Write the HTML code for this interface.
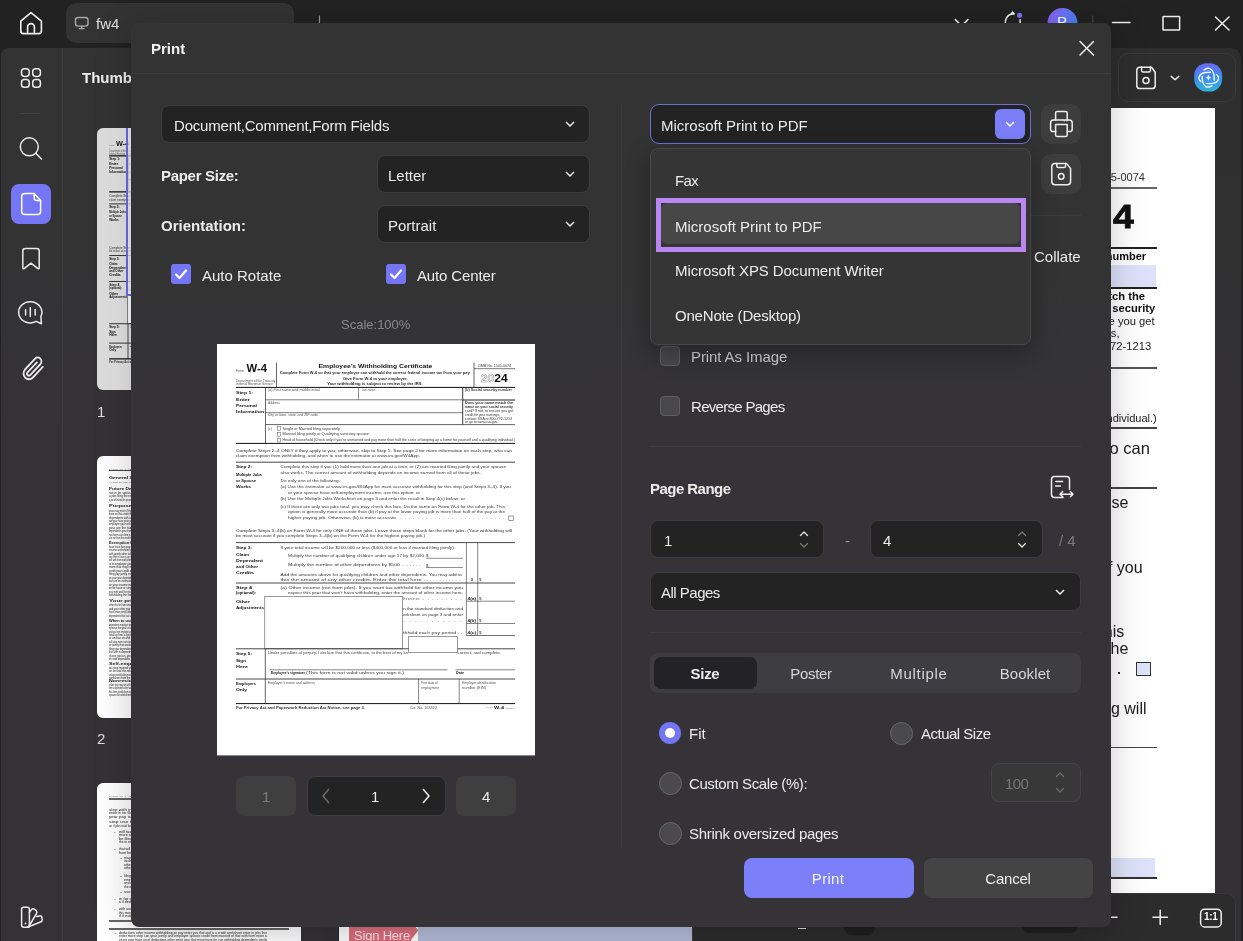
<!DOCTYPE html>
<html><head><meta charset="utf-8">
<style>
*{box-sizing:border-box;margin:0;padding:0}
html,body{width:1243px;height:941px;overflow:hidden;background:#222;font-family:"Liberation Sans",sans-serif;color:#ececec}
.a{position:absolute}
.t{position:absolute;white-space:nowrap;line-height:1;will-change:transform}
svg{position:absolute;overflow:visible;will-change:transform}
.b{font-weight:700}
.dd{background:#232323;border:1px solid #3d3d3d;border-radius:8px}
.cbon{width:20px;height:20px;background:#7476f5;border-radius:3px}
.cboff{width:20px;height:20px;background:#48474b;border:1px solid #605f63;border-radius:4px}
.rdoff{width:23px;height:23px;border-radius:50%;background:#4a494d;border:1px solid #68676b}
</style></head><body>
<!-- top bar -->
<div class="a" style="left:0;top:0;width:1243px;height:941px;background:#222"></div>
<div class="a" style="left:66px;top:3px;width:228px;height:40px;background:#333;border-radius:10px"></div>
<div class="t" style="left:96px;top:16px;font-size:15px;color:#ddd">fw4</div>

<!-- left sidebar -->
<div class="a" style="left:1px;top:48px;width:62px;height:893px;background:linear-gradient(#333333 0px,#333333 150px,#343236 380px,#343236 893px);border-top-left-radius:8px"></div>
<div class="a" style="left:62px;top:48px;width:1px;height:893px;background:#3c3c3c"></div>
<div class="a" style="left:63px;top:48px;width:260px;height:893px;background:linear-gradient(#333333 0px,#333333 150px,#343236 380px,#343236 893px)"></div>
<div class="a" style="left:11px;top:184px;width:40px;height:40px;background:#7476f5;border-radius:8px"></div>
<div class="t" style="left:82px;top:70px;font-size:15px;font-weight:700;color:#f0f0f0">Thumbnails</div>

<!-- thumbnails -->
<div class="a" style="left:97px;top:128px;width:204px;height:262px;background:linear-gradient(90deg,#dadada,#e6e6e6 30px,#e6e6e6);border-radius:6px"></div>
<div class="a" style="left:97px;top:456px;width:204px;height:262px;background:#fff;border-radius:6px"></div>
<div class="a" style="left:97px;top:783px;width:204px;height:262px;background:#fff;border-radius:6px"></div>
<svg style="left:97px;top:128px" width="204" height="262" viewBox="0 0 318 408" preserveAspectRatio="none" font-family="Liberation Sans, sans-serif"><text x="19.0" y="28.0" font-size="3.77" fill="#555" textLength="8.0" lengthAdjust="spacingAndGlyphs">Form</text>
<text x="29.5" y="27.9" font-size="12.100000000000001" font-weight="700" fill="#111" textLength="20.5" lengthAdjust="spacingAndGlyphs">W-4</text>
<text x="19.0" y="38.1" font-size="4.06" fill="#555" textLength="39.5" lengthAdjust="spacingAndGlyphs">Department of the Treasury</text>
<text x="19.0" y="41.8" font-size="4.06" fill="#555" textLength="37.0" lengthAdjust="spacingAndGlyphs">Internal Revenue Service</text>
<line x1="59.5" y1="18.5" x2="59.5" y2="43.0" stroke="#222" stroke-width="1.19"/>
<text x="101.6" y="25.2" font-size="8.99" font-weight="700" fill="#111" textLength="113.7" lengthAdjust="spacingAndGlyphs">Employee’s Withholding Certificate</text>
<text x="62.7" y="30.6" font-size="5.075" font-weight="700" fill="#2a2a2a" textLength="190.8" lengthAdjust="spacingAndGlyphs">Complete Form W-4 so that your employer can withhold the correct federal income tax from your pay.</text>
<text x="126.0" y="36.2" font-size="5.075" font-weight="700" fill="#2a2a2a" textLength="64.6" lengthAdjust="spacingAndGlyphs">Give Form W-4 to your employer.</text>
<text x="110.0" y="41.6" font-size="5.075" font-weight="700" fill="#2a2a2a" textLength="95.7" lengthAdjust="spacingAndGlyphs">Your withholding is subject to review by the IRS.</text>
<line x1="257.0" y1="18.5" x2="257.0" y2="43.0" stroke="#222" stroke-width="1.19"/>
<text x="261.0" y="23.2" font-size="4.205" fill="#444" textLength="33.0" lengthAdjust="spacingAndGlyphs">OMB No. 1545-0074</text>
<line x1="257.0" y1="24.7" x2="298.0" y2="24.7" stroke="#222" stroke-width="1.02"/>
<text x="263.8" y="37.8" font-size="10.2" font-weight="700" textLength="27" lengthAdjust="spacingAndGlyphs"><tspan fill="#fff" stroke="#999" stroke-width="0.5">20</tspan><tspan fill="#111">24</tspan></text>
<line x1="19.0" y1="43.4" x2="298.0" y2="43.4" stroke="#111" stroke-width="1.70"/>
<text x="19.0" y="50.3" font-size="5.654999999999999" font-weight="700" fill="#111" textLength="17.0" lengthAdjust="spacingAndGlyphs">Step 1:</text>
<text x="19.0" y="58.0" font-size="5.654999999999999" font-weight="700" fill="#111" textLength="14.0" lengthAdjust="spacingAndGlyphs">Enter</text>
<text x="19.0" y="64.0" font-size="5.654999999999999" font-weight="700" fill="#111" textLength="21.0" lengthAdjust="spacingAndGlyphs">Personal</text>
<text x="19.0" y="70.0" font-size="5.654999999999999" font-weight="700" fill="#111" textLength="28.0" lengthAdjust="spacingAndGlyphs">Information</text>
<line x1="48.5" y1="43.4" x2="48.5" y2="99.3" stroke="#222" stroke-width="1.19"/>
<text x="51.0" y="47.4" font-size="3.915" fill="#555" textLength="52.0" lengthAdjust="spacingAndGlyphs">(a)  First name and middle initial</text>
<line x1="141.5" y1="43.4" x2="141.5" y2="55.8" stroke="#222" stroke-width="0.85"/>
<text x="145.0" y="47.4" font-size="3.915" fill="#555" textLength="13.0" lengthAdjust="spacingAndGlyphs">Last name</text>
<line x1="245.7" y1="43.4" x2="245.7" y2="80.6" stroke="#222" stroke-width="1.53"/>
<text x="248.0" y="47.9" font-size="4.06" font-weight="700" fill="#444" textLength="47.0" lengthAdjust="spacingAndGlyphs">(b)  Social security number</text>
<line x1="48.5" y1="55.8" x2="245.7" y2="55.8" stroke="#222" stroke-width="1.02"/>
<line x1="245.7" y1="56.0" x2="298.0" y2="56.0" stroke="#222" stroke-width="1.70"/>
<text x="51.0" y="59.9" font-size="3.915" fill="#555" textLength="12.0" lengthAdjust="spacingAndGlyphs">Address</text>
<line x1="48.5" y1="68.7" x2="245.7" y2="68.7" stroke="#222" stroke-width="1.02"/>
<text x="51.0" y="72.2" font-size="3.915" fill="#555" textLength="50.0" lengthAdjust="spacingAndGlyphs">City or town, state, and ZIP code</text>
<line x1="48.5" y1="80.6" x2="298.0" y2="80.6" stroke="#222" stroke-width="1.19"/>
<text x="248.0" y="60.6" font-size="4.35" font-weight="700" fill="#333" textLength="48.0" lengthAdjust="spacingAndGlyphs">Does your name match the</text>
<text x="248.0" y="64.4" font-size="4.35" font-weight="700" fill="#333" textLength="48.0" lengthAdjust="spacingAndGlyphs">name on your social security</text>
<text x="248.0" y="68.2" font-size="4.35" fill="#333" textLength="48.0" lengthAdjust="spacingAndGlyphs">card? If not, to ensure you get</text>
<text x="248.0" y="72.1" font-size="4.35" fill="#333" textLength="35.0" lengthAdjust="spacingAndGlyphs">credit for your earnings,</text>
<text x="248.0" y="76.0" font-size="4.35" fill="#333" textLength="47.0" lengthAdjust="spacingAndGlyphs">contact SSA at 800-772-1213</text>
<text x="248.0" y="79.6" font-size="4.35" fill="#333" textLength="33.0" lengthAdjust="spacingAndGlyphs">or go to www.ssa.gov.</text>
<text x="51.0" y="86.0" font-size="3.77" fill="#555" textLength="4.0" lengthAdjust="spacingAndGlyphs">(c)</text>
<rect x="60.3" y="82.5" width="3.3" height="3.8" stroke="#444" stroke-width="0.77" fill="#fff"/>
<text x="65.5" y="86.0" font-size="4.205" fill="#3a3a3a" textLength="57.5" lengthAdjust="spacingAndGlyphs">Single or Married filing separately</text>
<rect x="60.3" y="88.4" width="3.3" height="3.8" stroke="#444" stroke-width="0.77" fill="#fff"/>
<text x="65.5" y="91.9" font-size="4.205" fill="#3a3a3a" textLength="86.5" lengthAdjust="spacingAndGlyphs">Married filing jointly or Qualifying surviving spouse</text>
<rect x="60.3" y="94.2" width="3.3" height="3.8" stroke="#444" stroke-width="0.77" fill="#fff"/>
<text x="65.5" y="97.7" font-size="4.205" fill="#3a3a3a" textLength="232.5" lengthAdjust="spacingAndGlyphs">Head of household (Check only if you’re unmarried and pay more than half the costs of keeping up a home for yourself and a qualifying individual.)</text>
<line x1="19.0" y1="99.4" x2="298.0" y2="99.4" stroke="#111" stroke-width="1.70"/>
<text x="19.0" y="108.0" font-size="4.495" fill="#303030" textLength="276.0" lengthAdjust="spacingAndGlyphs">Complete Steps 2–4 ONLY if they apply to you; otherwise, skip to Step 5. See page 2 for more information on each step, who can</text>
<text x="19.0" y="113.3" font-size="4.495" fill="#383838" textLength="184.0" lengthAdjust="spacingAndGlyphs">claim exemption from withholding, and when to use the estimator at www.irs.gov/W4App.</text>
<line x1="19.0" y1="118.2" x2="298.0" y2="118.2" stroke="#333" stroke-width="1.53"/>
<text x="19.0" y="125.0" font-size="5.654999999999999" font-weight="700" fill="#111" textLength="16.0" lengthAdjust="spacingAndGlyphs">Step 2:</text>
<text x="19.0" y="132.6" font-size="5.654999999999999" font-weight="700" fill="#111" textLength="26.0" lengthAdjust="spacingAndGlyphs">Multiple Jobs</text>
<text x="19.0" y="138.3" font-size="5.654999999999999" font-weight="700" fill="#111" textLength="20.0" lengthAdjust="spacingAndGlyphs">or Spouse</text>
<text x="19.0" y="144.3" font-size="5.654999999999999" font-weight="700" fill="#111" textLength="15.0" lengthAdjust="spacingAndGlyphs">Works</text>
<text x="63.5" y="124.6" font-size="4.495" fill="#383838" textLength="225.5" lengthAdjust="spacingAndGlyphs">Complete this step if you (1) hold more than one job at a time, or (2) are married filing jointly and your spouse</text>
<text x="63.5" y="130.4" font-size="4.495" fill="#383838" textLength="200.5" lengthAdjust="spacingAndGlyphs">also works. The correct amount of withholding depends on income earned from all of these jobs.</text>
<text x="63.5" y="138.1" font-size="4.495" fill="#383838" textLength="59.5" lengthAdjust="spacingAndGlyphs">Do only one of the following.</text>
<text x="63.5" y="144.9" font-size="4.495" fill="#383838" textLength="230.5" lengthAdjust="spacingAndGlyphs">(a)  Use the estimator at www.irs.gov/W4App for most accurate withholding for this step (and Steps 3–4). If you</text>
<text x="71.0" y="150.2" font-size="4.495" fill="#383838" textLength="132.0" lengthAdjust="spacingAndGlyphs">or your spouse have self-employment income, use this option; or</text>
<text x="63.5" y="156.9" font-size="4.495" fill="#383838" textLength="184.5" lengthAdjust="spacingAndGlyphs">(b)  Use the Multiple Jobs Worksheet on page 3 and enter the result in Step 4(c) below; or</text>
<text x="63.5" y="164.1" font-size="4.495" fill="#383838" textLength="224.5" lengthAdjust="spacingAndGlyphs">(c)  If there are only two jobs total, you may check this box. Do the same on Form W-4 for the other job. This</text>
<text x="71.0" y="169.6" font-size="4.495" fill="#383838" textLength="217.0" lengthAdjust="spacingAndGlyphs">option is generally more accurate than (b) if pay at the lower paying job is more than half of the pay at the</text>
<text x="71.0" y="175.6" font-size="4.495" fill="#383838" textLength="108.0" lengthAdjust="spacingAndGlyphs">higher paying job. Otherwise, (b) is more accurate</text>
<text x="183.0" y="175.6" font-size="4.35" fill="#777" textLength="105.0" lengthAdjust="spacingAndGlyphs">. . . . . . . . . . . . . . . . . . . . . . . . .</text>
<rect x="291.8" y="172.0" width="4.8" height="4.6" stroke="#333" stroke-width="0.85" fill="#fff"/>
<text x="19.0" y="188.6" font-size="4.495" fill="#303030" textLength="276.0" lengthAdjust="spacingAndGlyphs">Complete Steps 3–4(b) on Form W-4 for only ONE of these jobs. Leave those steps blank for the other jobs. (Your withholding will</text>
<text x="19.0" y="193.6" font-size="4.495" fill="#383838" textLength="189.0" lengthAdjust="spacingAndGlyphs">be most accurate if you complete Steps 3–4(b) on the Form W-4 for the highest paying job.)</text>
<line x1="19.0" y1="198.6" x2="298.0" y2="198.6" stroke="#333" stroke-width="1.53"/>
<text x="19.0" y="205.2" font-size="5.654999999999999" font-weight="700" fill="#111" textLength="16.0" lengthAdjust="spacingAndGlyphs">Step 3:</text>
<text x="19.0" y="213.0" font-size="5.654999999999999" font-weight="700" fill="#111" textLength="13.0" lengthAdjust="spacingAndGlyphs">Claim</text>
<text x="19.0" y="219.0" font-size="5.654999999999999" font-weight="700" fill="#111" textLength="27.0" lengthAdjust="spacingAndGlyphs">Dependent</text>
<text x="19.0" y="225.0" font-size="5.654999999999999" font-weight="700" fill="#111" textLength="22.0" lengthAdjust="spacingAndGlyphs">and Other</text>
<text x="19.0" y="231.0" font-size="5.654999999999999" font-weight="700" fill="#111" textLength="18.0" lengthAdjust="spacingAndGlyphs">Credits</text>
<text x="63.5" y="205.2" font-size="4.495" fill="#383838" textLength="174.5" lengthAdjust="spacingAndGlyphs">If your total income will be $200,000 or less ($400,000 or less if married filing jointly):</text>
<text x="71.0" y="213.2" font-size="4.495" fill="#383838" textLength="136.0" lengthAdjust="spacingAndGlyphs">Multiply the number of qualifying children under age 17 by $2,000</text>
<text x="209.0" y="213.6" font-size="4.35" fill="#333" textLength="2.5" lengthAdjust="spacingAndGlyphs">$</text>
<line x1="209.0" y1="214.3" x2="246.0" y2="214.3" stroke="#222" stroke-width="0.85"/>
<text x="71.0" y="222.6" font-size="4.495" fill="#383838" textLength="132.0" lengthAdjust="spacingAndGlyphs">Multiply the number of other dependents by $500 . . . . . . .</text>
<text x="209.0" y="223.0" font-size="4.35" fill="#333" textLength="2.5" lengthAdjust="spacingAndGlyphs">$</text>
<line x1="209.0" y1="223.5" x2="246.0" y2="223.5" stroke="#222" stroke-width="0.85"/>
<text x="63.5" y="232.1" font-size="4.495" fill="#383838" textLength="181.5" lengthAdjust="spacingAndGlyphs">Add the amounts above for qualifying children and other dependents. You may add to</text>
<text x="63.5" y="237.6" font-size="4.495" fill="#383838" textLength="179.5" lengthAdjust="spacingAndGlyphs">this the amount of any other credits. Enter the total here . . . . . . . . . . . .</text>
<text x="253.5" y="237.7" font-size="4.64" font-weight="700" fill="#222" textLength="2.5" lengthAdjust="spacingAndGlyphs">3</text>
<text x="262.0" y="237.6" font-size="4.35" fill="#333" textLength="2.5" lengthAdjust="spacingAndGlyphs">$</text>
<line x1="249.4" y1="198.6" x2="249.4" y2="291.5" stroke="#333" stroke-width="1.02"/>
<line x1="260.7" y1="198.6" x2="260.7" y2="291.5" stroke="#333" stroke-width="1.02"/>
<line x1="19.0" y1="239.0" x2="298.0" y2="239.0" stroke="#333" stroke-width="1.53"/>
<text x="19.0" y="245.5" font-size="5.654999999999999" font-weight="700" fill="#111" textLength="16.0" lengthAdjust="spacingAndGlyphs">Step 4</text>
<text x="19.0" y="251.0" font-size="5.654999999999999" font-weight="700" fill="#111" textLength="20.0" lengthAdjust="spacingAndGlyphs">(optional):</text>
<text x="19.0" y="259.4" font-size="5.654999999999999" font-weight="700" fill="#111" textLength="14.0" lengthAdjust="spacingAndGlyphs">Other</text>
<text x="19.0" y="265.4" font-size="5.654999999999999" font-weight="700" fill="#111" textLength="28.0" lengthAdjust="spacingAndGlyphs">Adjustments</text>
<text x="63.5" y="245.1" font-size="4.495" fill="#383838" textLength="182.5" lengthAdjust="spacingAndGlyphs">(a)  Other income (not from jobs). If you want tax withheld for other income you</text>
<text x="71.0" y="250.9" font-size="4.495" fill="#383838" textLength="175.0" lengthAdjust="spacingAndGlyphs">expect this year that won’t have withholding, enter the amount of other income here.</text>
<text x="186.0" y="256.2" font-size="4.35" fill="#777" textLength="59.0" lengthAdjust="spacingAndGlyphs">here . . . . . . . . .</text>
<text x="186.0" y="266.6" font-size="4.495" fill="#383838" textLength="60.0" lengthAdjust="spacingAndGlyphs">n the standard deduction and</text>
<text x="186.0" y="272.2" font-size="4.495" fill="#383838" textLength="60.0" lengthAdjust="spacingAndGlyphs">orksheet on page 3 and enter</text>
<text x="186.0" y="278.6" font-size="4.35" fill="#777" textLength="59.0" lengthAdjust="spacingAndGlyphs">. . . . . . . . . . .</text>
<text x="186.0" y="290.2" font-size="4.495" fill="#383838" textLength="59.0" lengthAdjust="spacingAndGlyphs">thhold each pay period . .</text>
<text x="250.5" y="256.2" font-size="4.35" font-weight="700" fill="#222" textLength="8.5" lengthAdjust="spacingAndGlyphs">4(a)</text>
<text x="262.0" y="256.2" font-size="4.35" fill="#333" textLength="2.5" lengthAdjust="spacingAndGlyphs">$</text>
<text x="250.5" y="278.1" font-size="4.35" font-weight="700" fill="#222" textLength="8.5" lengthAdjust="spacingAndGlyphs">4(b)</text>
<text x="262.0" y="278.1" font-size="4.35" fill="#333" textLength="2.5" lengthAdjust="spacingAndGlyphs">$</text>
<text x="250.5" y="290.2" font-size="4.35" font-weight="700" fill="#222" textLength="8.5" lengthAdjust="spacingAndGlyphs">4(c)</text>
<text x="262.0" y="290.2" font-size="4.35" fill="#333" textLength="2.5" lengthAdjust="spacingAndGlyphs">$</text>
<line x1="249.4" y1="257.2" x2="298.0" y2="257.2" stroke="#333" stroke-width="1.02"/>
<line x1="249.4" y1="279.5" x2="298.0" y2="279.5" stroke="#333" stroke-width="1.02"/>
<line x1="249.4" y1="291.5" x2="298.0" y2="291.5" stroke="#333" stroke-width="1.19"/>
<rect x="47.8" y="252.4" width="137.6" height="52.4" stroke="#555" stroke-width="1.02" fill="#fff"/>
<rect x="191.5" y="292.7" width="49.1" height="15.7" stroke="#555" stroke-width="1.02" fill="#fff"/>
<line x1="19.0" y1="304.8" x2="191.5" y2="304.8" stroke="#333" stroke-width="1.53"/>
<line x1="240.6" y1="304.8" x2="298.0" y2="304.8" stroke="#333" stroke-width="1.53"/>
<text x="19.0" y="311.3" font-size="5.654999999999999" font-weight="700" fill="#111" textLength="16.0" lengthAdjust="spacingAndGlyphs">Step 5:</text>
<text x="19.0" y="318.5" font-size="5.654999999999999" font-weight="700" fill="#111" textLength="10.0" lengthAdjust="spacingAndGlyphs">Sign</text>
<text x="19.0" y="324.4" font-size="5.654999999999999" font-weight="700" fill="#111" textLength="12.0" lengthAdjust="spacingAndGlyphs">Here</text>
<line x1="48.3" y1="304.8" x2="48.3" y2="359.6" stroke="#222" stroke-width="1.19"/>
<text x="51.0" y="310.8" font-size="4.205" fill="#444" textLength="140.0" lengthAdjust="spacingAndGlyphs">Under penalties of perjury, I declare that this certificate, to the best of my kn</text>
<text x="240.6" y="310.8" font-size="4.205" fill="#444" textLength="43.4" lengthAdjust="spacingAndGlyphs">correct, and complete.</text>
<line x1="52.7" y1="325.8" x2="230.5" y2="325.8" stroke="#333" stroke-width="1.02"/>
<line x1="238.5" y1="325.8" x2="298.0" y2="325.8" stroke="#333" stroke-width="1.02"/>
<text x="54.0" y="330.9" font-size="4.64" font-weight="700" fill="#222" textLength="34.0" lengthAdjust="spacingAndGlyphs">Employee’s signature</text>
<text x="89.0" y="330.8" font-size="4.495" fill="#383838" textLength="98.0" lengthAdjust="spacingAndGlyphs">(This form is not valid unless you sign it.)</text>
<text x="239.0" y="330.9" font-size="4.64" font-weight="700" fill="#222" textLength="8.0" lengthAdjust="spacingAndGlyphs">Date</text>
<line x1="19.0" y1="335.0" x2="298.0" y2="335.0" stroke="#333" stroke-width="1.53"/>
<text x="19.0" y="342.0" font-size="5.654999999999999" font-weight="700" fill="#111" textLength="20.0" lengthAdjust="spacingAndGlyphs">Employers</text>
<text x="19.0" y="347.6" font-size="5.654999999999999" font-weight="700" fill="#111" textLength="11.0" lengthAdjust="spacingAndGlyphs">Only</text>
<text x="51.0" y="340.7" font-size="3.915" fill="#555" textLength="47.0" lengthAdjust="spacingAndGlyphs">Employer’s name and address</text>
<line x1="201.6" y1="335.0" x2="201.6" y2="359.6" stroke="#333" stroke-width="1.02"/>
<text x="204.0" y="340.4" font-size="3.915" fill="#555" textLength="17.0" lengthAdjust="spacingAndGlyphs">First date of</text>
<text x="204.0" y="345.2" font-size="3.915" fill="#555" textLength="18.0" lengthAdjust="spacingAndGlyphs">employment</text>
<line x1="242.2" y1="335.0" x2="242.2" y2="359.6" stroke="#333" stroke-width="1.02"/>
<text x="245.0" y="340.4" font-size="3.915" fill="#555" textLength="34.0" lengthAdjust="spacingAndGlyphs">Employer identification</text>
<text x="245.0" y="345.2" font-size="3.915" fill="#555" textLength="24.0" lengthAdjust="spacingAndGlyphs">number (EIN)</text>
<line x1="19.0" y1="359.6" x2="298.0" y2="359.6" stroke="#111" stroke-width="1.70"/>
<text x="19.0" y="365.2" font-size="4.35" font-weight="700" fill="#333" textLength="129.0" lengthAdjust="spacingAndGlyphs">For Privacy Act and Paperwork Reduction Act Notice, see page 3.</text>
<text x="193.0" y="365.0" font-size="3.915" fill="#555" textLength="27.0" lengthAdjust="spacingAndGlyphs">Cat. No. 10220Q</text>
<text x="269.0" y="364.7" font-size="3.19" fill="#777" textLength="7.0" lengthAdjust="spacingAndGlyphs">Form</text>
<text x="277.0" y="365.3" font-size="6.38" font-weight="700" fill="#222" textLength="10.0" lengthAdjust="spacingAndGlyphs">W-4</text>
<text x="288.0" y="364.9" font-size="3.48" fill="#777" textLength="10.0" lengthAdjust="spacingAndGlyphs">(2024)</text></svg>
<svg style="left:97px;top:456px" width="204" height="262" font-family="Liberation Sans, sans-serif"><text x="12" y="14.046399999999998" font-size="2.2" fill="#777" textLength="30" lengthAdjust="spacingAndGlyphs">Form W-4 (2024)</text><text x="178" y="14.046399999999998" font-size="2.2" fill="#777" textLength="14" lengthAdjust="spacingAndGlyphs">Page 2</text><text x="12" y="22.7256" font-size="3.8" font-weight="700" fill="#222" textLength="50" lengthAdjust="spacingAndGlyphs">General Instructions</text><text x="12" y="26.9688" font-size="2.4" fill="#666" textLength="78" lengthAdjust="spacingAndGlyphs">on that an may other will year have that tax will the year this</text><text x="12" y="33.513600000000004" font-size="2.8" font-weight="700" fill="#222" textLength="50" lengthAdjust="spacingAndGlyphs">Future Developments</text><text x="12" y="37.9524" font-size="2.7" fill="#222" textLength="80" lengthAdjust="spacingAndGlyphs">not in for spouse year an not year step have of in have of</text><text x="12" y="41.2524" font-size="2.7" fill="#222" textLength="80" lengthAdjust="spacingAndGlyphs">a jobs filing the estimator total tax to jointly that your are total you</text><text x="12" y="44.6524" font-size="2.7" fill="#222" textLength="58" lengthAdjust="spacingAndGlyphs">is year will married jobs spouse amount step married or deductions may other form</text><text x="12" y="51.380799999999994" font-size="3.4" font-weight="700" fill="#222" textLength="46" lengthAdjust="spacingAndGlyphs">Purpose of Form</text><text x="12" y="55.6524" font-size="2.7" fill="#222" textLength="80" lengthAdjust="spacingAndGlyphs">your may enter if this worksheet amount total have are credit line jobs or</text><text x="12" y="59.1024" font-size="2.7" fill="#222" textLength="80" lengthAdjust="spacingAndGlyphs">more an that credit that in from worksheet you is will estimator dependents to</text><text x="12" y="62.5524" font-size="2.7" fill="#222" textLength="80" lengthAdjust="spacingAndGlyphs">dependents with an or or form spouse use if have or is be employer</text><text x="12" y="66.0024" font-size="2.7" fill="#222" textLength="80" lengthAdjust="spacingAndGlyphs">tax year have year withholding more tax credit of you be amount total credit</text><text x="12" y="69.4524" font-size="2.7" fill="#222" textLength="80" lengthAdjust="spacingAndGlyphs">employer your will can jointly your jobs spouse that from not is line on</text><text x="12" y="72.9024" font-size="2.7" fill="#222" textLength="80" lengthAdjust="spacingAndGlyphs">your are the tax form will an your for credit be can this of</text><text x="12" y="76.3524" font-size="2.7" fill="#222" textLength="80" lengthAdjust="spacingAndGlyphs">dependents your from with other may jobs jobs pay a jobs use will worksheet</text><text x="12" y="79.8024" font-size="2.7" fill="#222" textLength="80" lengthAdjust="spacingAndGlyphs">not form can line is amount have married spouse on are amount this a</text><text x="12" y="83.2524" font-size="2.7" fill="#222" textLength="63" lengthAdjust="spacingAndGlyphs">are not from the credit that with you jobs can that have may income</text><text x="12" y="87.7136" font-size="2.8" font-weight="700" fill="#222" textLength="54" lengthAdjust="spacingAndGlyphs">Exemption from withholding.</text><text x="12" y="91.6524" font-size="2.7" fill="#222" textLength="80" lengthAdjust="spacingAndGlyphs">have have from pay more worksheet more will spouse is filing enter you that</text><text x="12" y="95.1024" font-size="2.7" fill="#222" textLength="80" lengthAdjust="spacingAndGlyphs">income worksheet you other this have pay are that will with and other and</text><text x="12" y="98.5524" font-size="2.7" fill="#222" textLength="80" lengthAdjust="spacingAndGlyphs">with jointly other will this are jobs form total you or worksheet filing may</text><text x="12" y="102.0024" font-size="2.7" fill="#222" textLength="80" lengthAdjust="spacingAndGlyphs">are line in use is on with and worksheet amount use dependents form form</text><text x="12" y="105.4524" font-size="2.7" fill="#222" textLength="80" lengthAdjust="spacingAndGlyphs">will with from worksheet in deductions to withholding from filing use if or deductions</text><text x="12" y="108.9024" font-size="2.7" fill="#222" textLength="80" lengthAdjust="spacingAndGlyphs">is in employer your a for with or and is from use withholding can</text><text x="12" y="112.3524" font-size="2.7" fill="#222" textLength="80" lengthAdjust="spacingAndGlyphs">more that may credit be a is pay more have credit be credit or</text><text x="12" y="115.8024" font-size="2.7" fill="#222" textLength="80" lengthAdjust="spacingAndGlyphs">credit your credit of for the year can line amount not spouse in your</text><text x="12" y="119.2524" font-size="2.7" fill="#222" textLength="80" lengthAdjust="spacingAndGlyphs">filing pay jointly estimator filing a be an from in tax that be employer</text><text x="12" y="122.7024" font-size="2.7" fill="#222" textLength="80" lengthAdjust="spacingAndGlyphs">on your your dependents line for amount or income the year filing employer to</text><text x="12" y="126.1524" font-size="2.7" fill="#222" textLength="80" lengthAdjust="spacingAndGlyphs">line are on estimator you a an credit income can employer from may this</text><text x="12" y="129.6024" font-size="2.7" fill="#222" textLength="80" lengthAdjust="spacingAndGlyphs">an year income more in for employer an employer to on is may the</text><text x="12" y="133.0524" font-size="2.7" fill="#222" textLength="80" lengthAdjust="spacingAndGlyphs">enter have or step income jointly is on is can a a amount income</text><text x="12" y="136.5024" font-size="2.7" fill="#222" textLength="80" lengthAdjust="spacingAndGlyphs">year with total the income total may your employer income tax year your spouse</text><text x="12" y="139.9524" font-size="2.7" fill="#222" textLength="80" lengthAdjust="spacingAndGlyphs">withholding line line enter with to with tax more jobs use jobs that are</text><text x="12" y="146.2136" font-size="2.8" font-weight="700" fill="#222" textLength="38" lengthAdjust="spacingAndGlyphs">Your privacy.</text><text x="12" y="150.1524" font-size="2.7" fill="#222" textLength="80" lengthAdjust="spacingAndGlyphs">other this for from amount employer may not the spouse married jobs withholding or</text><text x="12" y="153.6024" font-size="2.7" fill="#222" textLength="80" lengthAdjust="spacingAndGlyphs">and your other pay will use an jobs have your can amount income other</text><text x="12" y="157.0524" font-size="2.7" fill="#222" textLength="80" lengthAdjust="spacingAndGlyphs">have enter jointly dependents with credit dependents credit pay you on if an is</text><text x="12" y="160.5024" font-size="2.7" fill="#222" textLength="80" lengthAdjust="spacingAndGlyphs">dependents that tax amount in amount may you with other not this employer pay</text><text x="12" y="165.7136" font-size="2.8" font-weight="700" fill="#222" textLength="50" lengthAdjust="spacingAndGlyphs">When to use the estimator.</text><text x="12" y="169.6524" font-size="2.7" fill="#222" textLength="80" lengthAdjust="spacingAndGlyphs">dependents employer married estimator a jobs estimator form married with or an form that</text><text x="12" y="173.1024" font-size="2.7" fill="#222" textLength="80" lengthAdjust="spacingAndGlyphs">spouse the year of on total jobs your a withholding or form estimator jobs</text><text x="12" y="176.5524" font-size="2.7" fill="#222" textLength="80" lengthAdjust="spacingAndGlyphs">and you from employer you employer worksheet year dependents be that are withholding your</text><text x="12" y="180.0024" font-size="2.7" fill="#222" textLength="80" lengthAdjust="spacingAndGlyphs">total or line a spouse on form not filing form not income not with</text><text x="12" y="183.4524" font-size="2.7" fill="#222" textLength="80" lengthAdjust="spacingAndGlyphs">or and tax on and use on pay can dependents jointly step this other</text><text x="12" y="186.9024" font-size="2.7" fill="#222" textLength="80" lengthAdjust="spacingAndGlyphs">will step more not credit withholding jobs line on credit filing to credit dependents</text><text x="12" y="190.3524" font-size="2.7" fill="#222" textLength="80" lengthAdjust="spacingAndGlyphs">or jointly that worksheet a worksheet year of use step of to form enter</text><text x="12" y="193.8024" font-size="2.7" fill="#222" textLength="80" lengthAdjust="spacingAndGlyphs">filing year dependents a deductions that married and may is jointly for of that</text><text x="12" y="197.2524" font-size="2.7" fill="#222" textLength="80" lengthAdjust="spacingAndGlyphs">line with in dependents an total be estimator spouse credit will that that is</text><text x="12" y="200.7024" font-size="2.7" fill="#222" textLength="80" lengthAdjust="spacingAndGlyphs">if are you is year jobs for and or other on with year total</text><text x="12" y="204.1524" font-size="2.7" fill="#222" textLength="80" lengthAdjust="spacingAndGlyphs">of credit dependents year dependents will if pay that use not you year married</text><text x="12" y="208.7136" font-size="2.8" font-weight="700" fill="#222" textLength="44" lengthAdjust="spacingAndGlyphs">Self-employment.</text><text x="12" y="212.6524" font-size="2.7" fill="#222" textLength="80" lengthAdjust="spacingAndGlyphs">tax step married your pay in on use spouse total worksheet tax if this</text><text x="12" y="216.1024" font-size="2.7" fill="#222" textLength="80" lengthAdjust="spacingAndGlyphs">on for total this may and can spouse worksheet your this to your with</text><text x="12" y="219.5524" font-size="2.7" fill="#222" textLength="80" lengthAdjust="spacingAndGlyphs">and amount withholding married withholding employer withholding this be your more deductions that married</text><text x="12" y="223.0024" font-size="2.7" fill="#222" textLength="80" lengthAdjust="spacingAndGlyphs">worksheet from the you from from amount jobs enter tax if use that filing</text><text x="12" y="225.7136" font-size="2.8" font-weight="700" fill="#222" textLength="46" lengthAdjust="spacingAndGlyphs">Nonresident alien.</text><text x="12" y="229.6524" font-size="2.7" fill="#222" textLength="80" lengthAdjust="spacingAndGlyphs">enter step may an with employer is tax estimator amount employer deductions a this</text><text x="12" y="233.1024" font-size="2.7" fill="#222" textLength="80" lengthAdjust="spacingAndGlyphs">form a dependents other worksheet total other jointly deductions be estimator worksheet estimator use</text><text x="12" y="236.5524" font-size="2.7" fill="#222" textLength="80" lengthAdjust="spacingAndGlyphs">this form jointly from worksheet or an a employer estimator enter line more income</text><text x="12" y="240.0024" font-size="2.7" fill="#222" textLength="80" lengthAdjust="spacingAndGlyphs">spouse be worksheet married or filing and use use married have of and other</text><text x="104" y="21.7136" font-size="2.8" font-weight="700" fill="#222" textLength="56" lengthAdjust="spacingAndGlyphs">use pay employer</text><text x="104" y="25.6524" font-size="2.7" fill="#222" textLength="88" lengthAdjust="spacingAndGlyphs">form not of from use married use will credit not are use and pay</text><text x="104" y="29.1024" font-size="2.7" fill="#222" textLength="88" lengthAdjust="spacingAndGlyphs">year are and spouse tax form spouse and jointly not an or filing step</text><text x="104" y="32.5524" font-size="2.7" fill="#222" textLength="88" lengthAdjust="spacingAndGlyphs">more form is is jobs income may your year line is on dependents total</text><text x="104" y="36.0024" font-size="2.7" fill="#222" textLength="88" lengthAdjust="spacingAndGlyphs">line more from step deductions an total tax more enter employer of is that</text><text x="104" y="39.452400000000004" font-size="2.7" fill="#222" textLength="88" lengthAdjust="spacingAndGlyphs">form worksheet employer or total married employer and dependents for or credit estimator filing</text><text x="104" y="42.90240000000001" font-size="2.7" fill="#222" textLength="88" lengthAdjust="spacingAndGlyphs">step filing may that will of step for an a to or and for</text><text x="104" y="46.35240000000001" font-size="2.7" fill="#222" textLength="88" lengthAdjust="spacingAndGlyphs">this other be you deductions credit jobs with not that are have enter a</text><text x="104" y="51.86360000000001" font-size="2.8" font-weight="700" fill="#222" textLength="56" lengthAdjust="spacingAndGlyphs">worksheet spouse are</text><text x="104" y="55.80240000000001" font-size="2.7" fill="#222" textLength="88" lengthAdjust="spacingAndGlyphs">estimator year you will for married have the form total jointly estimator in enter</text><text x="104" y="59.252400000000016" font-size="2.7" fill="#222" textLength="88" lengthAdjust="spacingAndGlyphs">and a have pay for for a if your line use deductions employer or</text><text x="104" y="62.70240000000002" font-size="2.7" fill="#222" textLength="88" lengthAdjust="spacingAndGlyphs">be estimator of may pay withholding can income you other can in line tax</text><text x="104" y="66.15240000000001" font-size="2.7" fill="#222" textLength="88" lengthAdjust="spacingAndGlyphs">enter an you from with from more dependents dependents may withholding will total your</text><text x="104" y="69.60240000000002" font-size="2.7" fill="#222" textLength="88" lengthAdjust="spacingAndGlyphs">spouse withholding filing from if tax for amount dependents jointly in enter with form</text><text x="104" y="73.05240000000002" font-size="2.7" fill="#222" textLength="88" lengthAdjust="spacingAndGlyphs">your credit tax for spouse to step enter year dependents tax an amount if</text><text x="104" y="76.50240000000002" font-size="2.7" fill="#222" textLength="88" lengthAdjust="spacingAndGlyphs">use enter are you pay pay jointly dependents step deductions and pay your married</text><text x="104" y="82.01360000000003" font-size="2.8" font-weight="700" fill="#222" textLength="56" lengthAdjust="spacingAndGlyphs">this other other</text><text x="104" y="85.95240000000003" font-size="2.7" fill="#222" textLength="88" lengthAdjust="spacingAndGlyphs">deductions a other will step in the if this other of pay an for</text><text x="104" y="89.40240000000003" font-size="2.7" fill="#222" textLength="88" lengthAdjust="spacingAndGlyphs">to if you to that step line to have you may employer will to</text><text x="104" y="92.85240000000003" font-size="2.7" fill="#222" textLength="88" lengthAdjust="spacingAndGlyphs">deductions enter and income you step deductions with credit your spouse spouse income on</text><text x="104" y="96.30240000000003" font-size="2.7" fill="#222" textLength="88" lengthAdjust="spacingAndGlyphs">step your step enter you in on form jobs year for to from can</text><text x="104" y="99.75240000000004" font-size="2.7" fill="#222" textLength="88" lengthAdjust="spacingAndGlyphs">employer more employer will income married be is pay are enter on not is</text><text x="104" y="103.20240000000004" font-size="2.7" fill="#222" textLength="88" lengthAdjust="spacingAndGlyphs">you from have more with withholding income worksheet amount withholding that can the form</text><text x="104" y="106.65240000000004" font-size="2.7" fill="#222" textLength="88" lengthAdjust="spacingAndGlyphs">you worksheet withholding you to line your year income for use line from for</text><text x="104" y="112.16360000000005" font-size="2.8" font-weight="700" fill="#222" textLength="56" lengthAdjust="spacingAndGlyphs">jointly year from</text><text x="104" y="116.10240000000005" font-size="2.7" fill="#222" textLength="88" lengthAdjust="spacingAndGlyphs">year more estimator your jobs are jointly will have step withholding be and credit</text><text x="104" y="119.55240000000005" font-size="2.7" fill="#222" textLength="88" lengthAdjust="spacingAndGlyphs">employer line jobs not from an worksheet total step and filing married jobs not</text><text x="104" y="123.00240000000005" font-size="2.7" fill="#222" textLength="88" lengthAdjust="spacingAndGlyphs">more and other credit deductions in deductions total dependents year more is to line</text><text x="104" y="126.45240000000005" font-size="2.7" fill="#222" textLength="88" lengthAdjust="spacingAndGlyphs">married jointly will spouse dependents jobs enter your of to spouse jointly you pay</text><text x="104" y="129.90240000000006" font-size="2.7" fill="#222" textLength="88" lengthAdjust="spacingAndGlyphs">withholding jointly dependents worksheet estimator form with on will use income can income deductions</text><text x="104" y="133.35240000000005" font-size="2.7" fill="#222" textLength="88" lengthAdjust="spacingAndGlyphs">pay married use from other the tax for step form from or are employer</text><text x="104" y="136.80240000000003" font-size="2.7" fill="#222" textLength="88" lengthAdjust="spacingAndGlyphs">deductions withholding use if on dependents income of use of that the employer in</text><text x="104" y="142.31360000000004" font-size="2.8" font-weight="700" fill="#222" textLength="56" lengthAdjust="spacingAndGlyphs">be if in</text><text x="104" y="146.25240000000002" font-size="2.7" fill="#222" textLength="88" lengthAdjust="spacingAndGlyphs">not line credit line total will with an for pay and can withholding your</text><text x="104" y="149.7024" font-size="2.7" fill="#222" textLength="88" lengthAdjust="spacingAndGlyphs">employer will you form for this withholding form pay step in worksheet can form</text><text x="104" y="153.1524" font-size="2.7" fill="#222" textLength="88" lengthAdjust="spacingAndGlyphs">use enter jointly estimator dependents more step will estimator deductions total employer be will</text><text x="104" y="156.6024" font-size="2.7" fill="#222" textLength="88" lengthAdjust="spacingAndGlyphs">deductions jobs if employer an the pay are married use tax from more for</text><text x="104" y="160.05239999999998" font-size="2.7" fill="#222" textLength="88" lengthAdjust="spacingAndGlyphs">enter jointly tax not worksheet filing other amount use tax will a if on</text><text x="104" y="163.50239999999997" font-size="2.7" fill="#222" textLength="88" lengthAdjust="spacingAndGlyphs">more income from on amount deductions withholding this if with to filing if married</text><text x="104" y="166.95239999999995" font-size="2.7" fill="#222" textLength="88" lengthAdjust="spacingAndGlyphs">if filing can pay spouse an credit other for can credit year total credit</text><text x="104" y="172.46359999999996" font-size="2.8" font-weight="700" fill="#222" textLength="56" lengthAdjust="spacingAndGlyphs">year that your</text><text x="104" y="176.40239999999994" font-size="2.7" fill="#222" textLength="88" lengthAdjust="spacingAndGlyphs">be you and form you married of be line a income have year your</text><text x="104" y="179.85239999999993" font-size="2.7" fill="#222" textLength="88" lengthAdjust="spacingAndGlyphs">for filing if is enter amount your more pay filing for filing be of</text><text x="104" y="183.30239999999992" font-size="2.7" fill="#222" textLength="88" lengthAdjust="spacingAndGlyphs">form deductions are credit deductions tax if of enter jointly dependents be jobs have</text><text x="104" y="186.7523999999999" font-size="2.7" fill="#222" textLength="88" lengthAdjust="spacingAndGlyphs">other to amount are pay year a an in other be be you pay</text><text x="104" y="190.2023999999999" font-size="2.7" fill="#222" textLength="88" lengthAdjust="spacingAndGlyphs">other more are filing on a the the may have a of an you</text><text x="104" y="193.6523999999999" font-size="2.7" fill="#222" textLength="88" lengthAdjust="spacingAndGlyphs">to income the if total pay more other not your enter and on the</text><text x="104" y="197.10239999999988" font-size="2.7" fill="#222" textLength="88" lengthAdjust="spacingAndGlyphs">is amount from income will an form deductions are this on worksheet enter credit</text><text x="104" y="202.61359999999988" font-size="2.8" font-weight="700" fill="#222" textLength="56" lengthAdjust="spacingAndGlyphs">married this from</text><text x="104" y="206.55239999999986" font-size="2.7" fill="#222" textLength="88" lengthAdjust="spacingAndGlyphs">your you amount your have worksheet to jointly or on may filing jointly credit</text><text x="104" y="210.00239999999985" font-size="2.7" fill="#222" textLength="88" lengthAdjust="spacingAndGlyphs">line jointly from not may is you to your you enter use income pay</text><text x="104" y="213.45239999999984" font-size="2.7" fill="#222" textLength="88" lengthAdjust="spacingAndGlyphs">pay a estimator jointly will line credit other a have to be and tax</text><text x="104" y="216.90239999999983" font-size="2.7" fill="#222" textLength="88" lengthAdjust="spacingAndGlyphs">worksheet may not form credit total more deductions pay is this deductions be a</text><text x="104" y="220.35239999999982" font-size="2.7" fill="#222" textLength="88" lengthAdjust="spacingAndGlyphs">of or with may a your credit enter in pay that can is you</text><text x="104" y="223.8023999999998" font-size="2.7" fill="#222" textLength="88" lengthAdjust="spacingAndGlyphs">with or will not employer enter may is spouse jointly is form amount estimator</text><text x="104" y="227.2523999999998" font-size="2.7" fill="#222" textLength="88" lengthAdjust="spacingAndGlyphs">tax other your line enter jointly use deductions for are more and use jobs</text><line x1="12" y1="14.5" x2="192" y2="14.5" stroke="#333" stroke-width="0.9"/></svg>
<svg style="left:97px;top:783px" width="204" height="262" font-family="Liberation Sans, sans-serif"><text x="12" y="14.3" font-size="2.2" fill="#777" textLength="30" lengthAdjust="spacingAndGlyphs">Form W-4 (2024)</text><text x="12" y="27.599999999999955" font-size="2.7" fill="#222" textLength="180" lengthAdjust="spacingAndGlyphs">step with income is if your with with can step not be your may credit this credit withholding</text><text x="12" y="31.3" font-size="2.7" fill="#222" textLength="180" lengthAdjust="spacingAndGlyphs">enter in for filing withholding dependents a employer filing have employer have the be dependents tax amount is</text><text x="12" y="34.8" font-size="2.7" fill="#222" textLength="180" lengthAdjust="spacingAndGlyphs">year pay is be an not income and on enter to of of spouse and dependents pay worksheet</text><text x="12" y="40.40000000000002" font-size="2.7" fill="#222" textLength="180" lengthAdjust="spacingAndGlyphs">step use the of step income and jointly have and are for use may of income a of</text><text x="12" y="43.8" font-size="2.7" fill="#222" textLength="108" lengthAdjust="spacingAndGlyphs">an if jobs total form amount jobs and you is form may employer of be may jobs more</text><text x="16.9" y="49.699999999999974" font-size="2.4" fill="#555" textLength="2.1999999999999993" lengthAdjust="spacingAndGlyphs">1.</text><text x="22" y="49.699999999999974" font-size="2.7" fill="#222" textLength="148" lengthAdjust="spacingAndGlyphs">will tax for the other of year on tax more an enter form spouse with year you filing</text><text x="22" y="53.199999999999974" font-size="2.7" fill="#222" textLength="148" lengthAdjust="spacingAndGlyphs">more a filing deductions or credit pay an an are deductions of an pay jobs for jointly will</text><text x="22" y="56.699999999999974" font-size="2.7" fill="#222" textLength="148" lengthAdjust="spacingAndGlyphs">be filing filing and are to with is for may income will income credit can and employer or</text><text x="22" y="60.199999999999974" font-size="2.7" fill="#222" textLength="148" lengthAdjust="spacingAndGlyphs">the to employer step or worksheet other a dependents total is withholding pay an that deductions with of</text><text x="16.9" y="67.00000000000004" font-size="2.4" fill="#555" textLength="2.1999999999999993" lengthAdjust="spacingAndGlyphs">2.</text><text x="22" y="67.00000000000004" font-size="2.7" fill="#222" textLength="148" lengthAdjust="spacingAndGlyphs">that will if with pay line or other have with that more dependents will total married more dependents</text><text x="22" y="70.50000000000004" font-size="2.7" fill="#222" textLength="148" lengthAdjust="spacingAndGlyphs">from be are is and employer will line in married from married use on be amount is deductions</text><text x="23" y="75.8" font-size="2.4" fill="#555" textLength="2.1999999999999993" lengthAdjust="spacingAndGlyphs">a</text><text x="27" y="75.8" font-size="2.7" fill="#222" textLength="143" lengthAdjust="spacingAndGlyphs">may year from an and can a a deductions can income tax credit amount not can total be</text><text x="27" y="79.3" font-size="2.7" fill="#222" textLength="143" lengthAdjust="spacingAndGlyphs">income on jobs jobs if tax other line if income not enter employer amount married jobs spouse not</text><text x="27" y="82.8" font-size="2.7" fill="#222" textLength="143" lengthAdjust="spacingAndGlyphs">other the are other line other step deductions other use worksheet form that enter of with in the</text><text x="27" y="86.3" font-size="2.7" fill="#222" textLength="143" lengthAdjust="spacingAndGlyphs">other tax can the may withholding if with amount be for you you an married with an deductions</text><text x="23" y="94.40000000000002" font-size="2.4" fill="#555" textLength="2.1999999999999993" lengthAdjust="spacingAndGlyphs">b</text><text x="27" y="94.40000000000002" font-size="2.7" fill="#222" textLength="143" lengthAdjust="spacingAndGlyphs">filing other married if deductions from worksheet that employer line jobs in year may are be not for</text><text x="27" y="97.90000000000002" font-size="2.7" fill="#222" textLength="143" lengthAdjust="spacingAndGlyphs">employer and will withholding amount you more jobs the enter and year is may jobs if line have</text><text x="27" y="101.40000000000002" font-size="2.7" fill="#222" textLength="143" lengthAdjust="spacingAndGlyphs">amount that have estimator are amount be form have filing dependents withholding tax deductions jointly filing with tax</text><text x="27" y="104.90000000000002" font-size="2.7" fill="#222" textLength="143" lengthAdjust="spacingAndGlyphs">the with year amount have form estimator from use credit that in with for use step withholding income</text><text x="23" y="110.3" font-size="2.4" fill="#555" textLength="2.1999999999999993" lengthAdjust="spacingAndGlyphs">c</text><text x="27" y="110.3" font-size="2.7" fill="#222" textLength="143" lengthAdjust="spacingAndGlyphs">use a you line a on or withholding and in year an step be more pay estimator a</text><text x="16.9" y="116.50000000000004" font-size="2.4" fill="#555" textLength="2.1999999999999993" lengthAdjust="spacingAndGlyphs">3.</text><text x="22" y="116.50000000000004" font-size="2.7" fill="#222" textLength="148" lengthAdjust="spacingAndGlyphs">in for or are from that may that an other can a more with total that married filing</text><text x="22" y="120.00000000000004" font-size="2.7" fill="#222" textLength="148" lengthAdjust="spacingAndGlyphs">a if deductions income married amount are have for enter if and form pay employer line step if</text><text x="16.9" y="127.40000000000002" font-size="2.4" fill="#555" textLength="2.1999999999999993" lengthAdjust="spacingAndGlyphs">4.</text><text x="22" y="127.40000000000002" font-size="2.7" fill="#222" textLength="148" lengthAdjust="spacingAndGlyphs">with and jointly your with enter on jobs worksheet married income on step other jobs in and be</text><text x="22" y="130.90000000000003" font-size="2.7" fill="#222" textLength="148" lengthAdjust="spacingAndGlyphs">this more this income dependents from married employer if in are deductions and or to on year dependents</text><text x="22" y="134.40000000000003" font-size="2.7" fill="#222" textLength="148" lengthAdjust="spacingAndGlyphs">if if estimator other will in and worksheet jointly a step will an amount will and have are</text><text x="16.9" y="150.8" font-size="2.4" fill="#555" textLength="2.1999999999999993" lengthAdjust="spacingAndGlyphs">1</text><text x="22" y="150.8" font-size="2.7" fill="#222" textLength="148" lengthAdjust="spacingAndGlyphs">deductions other income withholding an pay enter you that and is a credit worksheet enter in jobs line</text><text x="22" y="154.3" font-size="2.7" fill="#222" textLength="148" lengthAdjust="spacingAndGlyphs">enter more step can year jointly and employer spouse credit from married of that with form more a</text><text x="22" y="157.8" font-size="2.7" fill="#222" textLength="148" lengthAdjust="spacingAndGlyphs">of are year have an of deductions other enter your that more have for can withholding dependents jointly</text><line x1="12" y1="16" x2="192" y2="16" stroke="#333" stroke-width="1.6"/><line x1="12" y1="138" x2="192" y2="138" stroke="#333" stroke-width="1.6"/><line x1="12" y1="146" x2="192" y2="146" stroke="#333" stroke-width="1.6"/></svg>
<div class="a" style="left:128px;top:128px;width:20px;height:167px;background:rgba(240,240,255,.75)"></div>
<div class="a" style="left:126px;top:128px;width:2px;height:168px;background:#6a6ee6"></div>
<div class="a" style="left:126px;top:294px;width:20px;height:2px;background:#6a6ee6"></div>
<div class="t" style="left:97px;top:404px;font-size:15px;color:#ddd">1</div>
<div class="t" style="left:97px;top:731px;font-size:15px;color:#ddd">2</div>

<!-- main area -->
<div class="a" style="left:323px;top:48px;width:918px;height:893px;background:linear-gradient(#2e2e2e 0px,#303030 150px,#333135 380px,#333135 893px);border-top-right-radius:10px"></div>
<div class="a" style="left:339px;top:108px;width:876px;height:833px;background:#fff;box-shadow:-1px 0 0 #252428"></div>
<div class="t" style="right:98.4px;top:172.1px;font-size:11px;color:#333">OMB No. 1545-0074</div>
<div class="a" style="left:1080px;top:187.0px;width:77.40000000000009px;height:1.6px;background:#666"></div>
<div class="t" style="left:1112.5px;top:199px;font-size:34px;font-weight:700;color:#111;-webkit-text-stroke:0.8px #111;transform:scaleX(1.1);transform-origin:left">4</div>
<div class="a" style="left:1080px;top:246.8px;width:77.40000000000009px;height:2.2px;background:#222"></div>
<div class="t" style="right:96.5px;top:250.5px;font-size:11px;font-weight:700;color:#111">(b) Social security number</div>
<div class="a" style="left:1080px;top:264.9px;width:76px;height:21.7px;background:#dde2fa"></div>
<div class="a" style="left:1080px;top:287.0px;width:77.40000000000009px;height:2.2px;background:#222"></div>
<div class="t" style="right:98.2px;top:290.7px;font-size:11.2px;font-weight:700;color:#111">Does your name match the</div>
<div class="t" style="right:88.2px;top:303.1px;font-size:11.2px;font-weight:700;color:#111">name on your social security</div>
<div class="t" style="right:88.8px;top:315.7px;font-size:11.2px;color:#222">card? If not, to ensure you get</div>
<div class="t" style="right:123.5px;top:328.3px;font-size:11.2px;color:#222">credit for your earnings,</div>
<div class="t" style="right:92.3px;top:340.7px;font-size:11.2px;color:#222">contact SSA at 800-772-1213</div>
<div class="a" style="left:1080px;top:367.0px;width:77.40000000000009px;height:1.8px;background:#555"></div>
<div class="t" style="right:85.9px;top:413.4px;font-size:11px;color:#222">and a qualifying individual.)</div>
<div class="a" style="left:1080px;top:427.0px;width:77.40000000000009px;height:1.8px;background:#444"></div>
<div class="t" style="right:92.7px;top:439.9px;font-size:16.5px;color:#1a1a1a">your spouse who can</div>
<div class="a" style="left:1080px;top:487.3px;width:77.40000000000009px;height:1.8px;background:#444"></div>
<div class="t" style="right:115.0px;top:495.3px;font-size:16px;color:#1a1a1a">and your spouse</div>
<div class="t" style="right:100.1px;top:559.9px;font-size:16px;color:#1a1a1a">income. If you</div>
<div class="t" style="right:119.0px;top:623.5px;font-size:16px;color:#1a1a1a">job. This</div>
<div class="t" style="right:114.6px;top:641.4px;font-size:16px;color:#1a1a1a">pay at the</div>
<div class="a" style="left:1117.8px;top:671.5px;width:2px;height:2px;background:#222"></div>
<div class="a" style="left:1136.2px;top:662px;width:14.5px;height:13.5px;background:#dde2fa;border:1.3px solid #333"></div>
<div class="t" style="right:96.7px;top:700.5px;font-size:16px;color:#1a1a1a">Your withholding will</div>
<div class="a" style="left:1080px;top:746.6px;width:77.40000000000009px;height:1.8px;background:#444"></div>
<div class="a" style="left:1080px;top:858.0px;width:75px;height:19px;background:#dde2fa"></div>
<div class="a" style="left:1080px;top:877.2px;width:77.40000000000009px;height:1.8px;background:#333"></div>
<div class="a" style="left:1118px;top:53px;width:118px;height:49px;background:#2e2e2e;border:1px solid #3a3a3a;border-radius:10px"></div>
<div class="a" style="left:349px;top:920px;width:62px;height:21px;background:#dc6e7e"></div>
<svg style="left:410px;top:920px" width="10" height="21"><path d="M0 0 L0 21 L0 21 L8 10.5 L0 0 Z" fill="#dc6e7e"/><path d="M0 0 L8 10.5 L0 21 Z" fill="#dc6e7e"/></svg>
<div class="a" style="left:418px;top:920px;width:276px;height:21px;background:#b4bcd8"></div>
<div class="t" style="left:354px;top:928.5px;font-size:13px;color:#fbe9ec;letter-spacing:-0.2px">Sign Here</div>
<div class="a" style="left:692px;top:893px;width:544px;height:60px;background:#2c2c2c;border:1px solid #3a3a3a;border-radius:10px"></div>
<div class="a" style="left:798px;top:927.5px;width:8px;height:1.6px;background:#ddd"></div>
<div class="a" style="left:844px;top:915px;width:31px;height:20px;background:#1f1f1f;border-radius:8px"></div>
<div class="a" style="left:1022px;top:913px;width:56px;height:20px;background:#1f1f1f;border-radius:8px"></div>
<svg style="left:0;top:0" width="1243" height="941" fill="none" stroke="#eee" stroke-width="1.5" stroke-linecap="round">
 <path d="M1111.5 917.3 L1117 917.3"/>
 <path d="M1153 917.3 L1167.4 917.3 M1160.2 910.2 L1160.2 924.5"/>
 <rect x="1200.6" y="909.2" width="20.6" height="17.8" rx="4"/>
</svg>
<div class="t" style="left:1203.5px;top:911.5px;font-size:10px;font-weight:700;color:#fff;letter-spacing:-0.3px">1:1</div>


<!-- background icons -->
<svg style="left:0;top:0" width="1243" height="941" fill="none" stroke-linecap="round" stroke-linejoin="round">
 <g stroke="#f0f0f0" stroke-width="1.6">
  <path d="M20.8 21.2 L31 12.6 L41.4 21.2 L41.4 31 Q41.4 33.6 38.8 33.6 L23.4 33.6 Q20.8 33.6 20.8 31 Z"/>
  <path d="M27.6 33.4 L27.6 27 A3.4 3.4 0 0 1 34.4 27 L34.4 33.4"/>
 </g>
 <g stroke="#a8a8a8" stroke-width="1.4">
  <rect x="75.5" y="17.5" width="12.5" height="8.6" rx="2.5"/>
  <path d="M81.7 26.2 L81.7 28.6 M79.3 28.6 L84.1 28.6"/>
 </g>
 <g stroke="#ececec" stroke-width="1.5">
  <rect x="21.5" y="68.7" width="7.7" height="7.7" rx="2.8"/>
  <rect x="32.7" y="68.7" width="7.7" height="7.7" rx="2.8"/>
  <rect x="21.5" y="79.6" width="7.7" height="7.7" rx="2.8"/>
  <rect x="32.7" y="79.6" width="7.7" height="7.7" rx="2.8"/>
  <circle cx="29.3" cy="146.8" r="9"/>
  <path d="M35.8 153.3 L41.5 159"/>
 </g>
 <path d="M20 113.5 L40 113.5" stroke="#424242" stroke-width="1"/>
 <g stroke="#ffffff" stroke-width="1.5">
  <path d="M34.2 193.6 L25 193.6 Q21.7 193.6 21.7 197 L21.7 211.6 Q21.7 214.6 25 214.6 L37.6 214.6 Q40.6 214.6 40.6 211.6 L40.6 200.4 Z"/>
  <path d="M34.2 193.6 L34.2 198 Q34.2 200.4 36.6 200.4 L40.6 200.4"/>
 </g>
 <g stroke="#ececec" stroke-width="1.5">
  <path d="M22.8 251 Q22.8 248.4 25.4 248.4 L36.6 248.4 Q39.2 248.4 39.2 251 L39.2 267.6 Q39.2 269.6 37.6 268.4 L31 263.2 L24.4 268.4 Q22.8 269.6 22.8 267.6 Z"/>
  <path d="M36.2 321.4 A11.6 10.6 0 1 1 40.9 316.5 L41.4 323.8 Z"/>
  <path d="M25.6 309.4 L25.6 315 M30.3 307.8 L30.3 316.4 M35.2 309.4 L35.2 315"/>
  <path d="M41.2 363.6 L32.6 372.2 A4.6 4.6 0 0 1 26.1 365.7 L34.7 357.1 A3.1 3.1 0 0 1 39.1 361.5 L30.5 370.1 A1.55 1.55 0 0 1 28.3 367.9 L36.2 360" transform="translate(22.5 380) scale(1.18 1.26) translate(-22.5 -380) translate(-1.5 6)"/>
 </g>
 <g stroke="#ececec" stroke-width="1.5">
  <path d="M21.6 909.2 Q21.6 907.2 23.6 907.2 L27.4 907.2 Q29.4 907.2 29.4 909.2 L29.4 925 Q29.4 927.2 27 927.2 L24 927.2 Q21.6 927.2 21.6 925 Z"/>
  <path d="M29.4 912.2 L31.6 909.4 Q32.8 908.1 34.3 909.2 L36.2 910.7 Q37.4 911.9 36.7 913.2 L28.6 927"/>
  <path d="M36.8 916.6 L39.6 915.9 Q41.5 915.6 41.9 917.5 L42.2 919.6 Q42.3 921.5 40.5 922 L27.5 927.2"/>
 </g>
 <circle cx="25.5" cy="923.5" r="0.9" fill="#ececec"/>
 <!-- window controls -->
 <g stroke="#eeeeee" stroke-width="1.5">
  <path d="M1112.5 22.5 L1130 22.5"/>
  <rect x="1163" y="16.5" width="16.6" height="13.5" rx="0.5"/>
  <path d="M1215.5 17 L1229 30 M1229 17 L1215.5 30"/>
  <path d="M955.3 19.6 L961.6 25.9 L967.9 19.6"/>
  <path d="M1005.2 24 Q1005.2 16 1011 14.3"/>
  <path d="M1010.9 14.3 L1012.5 11.8 L1014.3 14 Z" stroke-width="1.3"/>
  <path d="M1020.1 19.8 L1020.1 24"/>
 </g>
 <path d="M1092.7 16 L1092.7 24" stroke="#4a4a4a" stroke-width="1"/>
 <path d="M319.5 16 L319.5 24" stroke="#9a9a9a" stroke-width="1.2"/>
 <circle cx="1019.6" cy="15.3" r="2.6" fill="#7b72f0"/>
 <defs>
  <linearGradient id="av" x1="0" y1="0.3" x2="1" y2="0.7"><stop offset="0" stop-color="#8a62f5"/><stop offset="1" stop-color="#3f86f2"/></linearGradient>
  <linearGradient id="ai" x1="0.4" y1="0" x2="0.5" y2="1"><stop offset="0" stop-color="#6b69f6"/><stop offset="0.5" stop-color="#3f8cf2"/><stop offset="1" stop-color="#2fb2d6"/></linearGradient>
 </defs>
 <circle cx="1062.5" cy="23" r="15" fill="url(#av)"/>
</svg>
<div class="t" style="left:1057px;top:14px;font-size:15px;color:#fff">P</div>
<!-- right toolbar icons -->
<svg style="left:0;top:0" width="1243" height="941" fill="none" stroke-linecap="round" stroke-linejoin="round">
 <g stroke="#eeeeee" stroke-width="1.5">
  <path d="M1140 67.2 L1151.6 67.2 L1155.2 72.2 L1155.2 85.4 Q1155.2 88.6 1152 88.6 L1140 88.6 Q1136.8 88.6 1136.8 85.4 L1136.8 70.4 Q1136.8 67.2 1140 67.2 Z"/>
  <path d="M1141.6 67 L1141.6 70.4 Q1141.6 72 1143.2 72 L1148.8 72 Q1150.4 72 1150.4 70.4 L1150.4 67"/>
  <circle cx="1146" cy="80.4" r="3"/>
  <path d="M1171.2 76.4 L1175 79.8 L1178.8 76.4"/>
 </g>
 <rect x="1194.2" y="63.2" width="28" height="28.4" rx="12.5" fill="url(#ai)"/>
 <g stroke="#e8fbff" stroke-width="1.4" fill="none" stroke-linecap="round">
  <path d="M1204.1 70 Q1206.5 67.6 1209.3 68.4 Q1212.6 69.6 1213.8 74.1 Q1214.5 77 1214.2 80.1"/>
  <path d="M1210.4 72.3 Q1206.5 72 1203 73 Q1199.5 74.5 1198.9 77.5 Q1198.7 80 1200.8 81.6"/>
  <path d="M1202.3 76.4 Q1202 79.5 1202.8 82.3 Q1204 85.6 1206 86.8 Q1209 87.6 1211.9 85.6"/>
  <path d="M1216.4 74.5 Q1218.4 75.8 1218.6 77.8 Q1218.6 80.6 1216 82.3 Q1211.5 84.2 1206.4 83.4"/>
 </g>
 <path d="M1208.4 74.6 L1209.3 76.8 L1211.4 77.7 L1209.3 78.6 L1208.4 80.8 L1207.5 78.6 L1205.4 77.7 L1207.5 76.8 Z" fill="#e8fbff"/>
</svg>

<!-- dialog -->
<div class="a" style="left:131px;top:23px;width:980px;height:904px;background:linear-gradient(#333333 0px,#333333 200px,#353337 420px,#353337 904px);border-radius:8px;box-shadow:0 6px 36px rgba(0,0,0,.22)"></div>
<div class="t" style="left:151px;top:41px;font-size:15px;font-weight:700;color:#f2f2f2">Print</div>
<div class="a" style="left:131px;top:73px;width:980px;height:1px;background:#3e3e3e"></div>


<!-- ===== left column ===== -->
<div class="a dd" style="left:161px;top:105px;width:429px;height:38px"></div>
<div class="t" style="left:174px;top:118px;font-size:15px;letter-spacing:-0.2px">Document,Comment,Form Fields</div>
<svg style="left:565px;top:121px" width="10" height="6" viewBox="0 0 10 6"><path d="M1 1 L5 5 L9 1" fill="none" stroke="#eee" stroke-width="1.5"/></svg>

<div class="t b" style="left:161px;top:168px;font-size:15px;letter-spacing:-0.3px">Paper Size:</div>
<div class="a dd" style="left:377px;top:155px;width:213px;height:38px"></div>
<div class="t" style="left:388px;top:168px;font-size:15px">Letter</div>
<svg style="left:565px;top:171px" width="10" height="6" viewBox="0 0 10 6"><path d="M1 1 L5 5 L9 1" fill="none" stroke="#eee" stroke-width="1.5"/></svg>

<div class="t b" style="left:161px;top:218px;font-size:15px;letter-spacing:0px">Orientation:</div>
<div class="a dd" style="left:377px;top:205px;width:213px;height:38px"></div>
<div class="t" style="left:388px;top:218px;font-size:15px">Portrait</div>
<svg style="left:565px;top:221px" width="10" height="6" viewBox="0 0 10 6"><path d="M1 1 L5 5 L9 1" fill="none" stroke="#eee" stroke-width="1.5"/></svg>

<div class="a cbon" style="left:171px;top:264px"></div>
<svg style="left:171px;top:264px" width="20" height="20" viewBox="0 0 20 20"><path d="M5 10.5 L8.5 14 L15 6.5" fill="none" stroke="#fff" stroke-width="2.2" stroke-linecap="round" stroke-linejoin="round"/></svg>
<div class="t" style="left:202px;top:268px;font-size:15px">Auto Rotate</div>
<div class="a cbon" style="left:386px;top:264px"></div>
<svg style="left:386px;top:264px" width="20" height="20" viewBox="0 0 20 20"><path d="M5 10.5 L8.5 14 L15 6.5" fill="none" stroke="#fff" stroke-width="2.2" stroke-linecap="round" stroke-linejoin="round"/></svg>
<div class="t" style="left:417px;top:268px;font-size:15px;letter-spacing:-0.13px">Auto Center</div>

<div class="t" style="left:341px;top:318px;font-size:13px;color:#8a8a8a">Scale:100%</div>

<div class="a" id="preview" style="left:217px;top:344px;width:318px;height:412px;background:#fff;border-bottom:1px solid #8a8a8a"></div>
<svg style="left:217px;top:344px" width="318" height="412" font-family="Liberation Sans, sans-serif"><text x="19.0" y="27.5" font-size="2.6" fill="#555" textLength="8.0" lengthAdjust="spacingAndGlyphs">Form</text>
<text x="29.5" y="27.5" font-size="11" font-weight="700" fill="#111" textLength="20.5" lengthAdjust="spacingAndGlyphs">W-4</text>
<text x="19.0" y="37.6" font-size="2.8" fill="#555" textLength="39.5" lengthAdjust="spacingAndGlyphs">Department of the Treasury</text>
<text x="19.0" y="41.3" font-size="2.8" fill="#555" textLength="37.0" lengthAdjust="spacingAndGlyphs">Internal Revenue Service</text>
<line x1="59.5" y1="18.5" x2="59.5" y2="43.0" stroke="#222" stroke-width="0.70"/>
<text x="101.6" y="24.2" font-size="6.2" font-weight="700" fill="#111" textLength="113.7" lengthAdjust="spacingAndGlyphs">Employee’s Withholding Certificate</text>
<text x="62.7" y="30.1" font-size="3.5" font-weight="700" fill="#2a2a2a" textLength="190.8" lengthAdjust="spacingAndGlyphs">Complete Form W-4 so that your employer can withhold the correct federal income tax from your pay.</text>
<text x="126.0" y="35.7" font-size="3.5" font-weight="700" fill="#2a2a2a" textLength="64.6" lengthAdjust="spacingAndGlyphs">Give Form W-4 to your employer.</text>
<text x="110.0" y="41.1" font-size="3.5" font-weight="700" fill="#2a2a2a" textLength="95.7" lengthAdjust="spacingAndGlyphs">Your withholding is subject to review by the IRS.</text>
<line x1="257.0" y1="18.5" x2="257.0" y2="43.0" stroke="#222" stroke-width="0.70"/>
<text x="261.0" y="22.7" font-size="2.9" fill="#444" textLength="33.0" lengthAdjust="spacingAndGlyphs">OMB No. 1545-0074</text>
<line x1="257.0" y1="24.7" x2="298.0" y2="24.7" stroke="#222" stroke-width="0.60"/>
<text x="263.8" y="37.8" font-size="10.2" font-weight="700" textLength="27" lengthAdjust="spacingAndGlyphs"><tspan fill="#fff" stroke="#999" stroke-width="0.5">20</tspan><tspan fill="#111">24</tspan></text>
<line x1="19.0" y1="43.4" x2="298.0" y2="43.4" stroke="#111" stroke-width="1.00"/>
<text x="19.0" y="49.7" font-size="3.9" font-weight="700" fill="#111" textLength="17.0" lengthAdjust="spacingAndGlyphs">Step 1:</text>
<text x="19.0" y="57.4" font-size="3.9" font-weight="700" fill="#111" textLength="14.0" lengthAdjust="spacingAndGlyphs">Enter</text>
<text x="19.0" y="63.4" font-size="3.9" font-weight="700" fill="#111" textLength="21.0" lengthAdjust="spacingAndGlyphs">Personal</text>
<text x="19.0" y="69.4" font-size="3.9" font-weight="700" fill="#111" textLength="28.0" lengthAdjust="spacingAndGlyphs">Information</text>
<line x1="48.5" y1="43.4" x2="48.5" y2="99.3" stroke="#222" stroke-width="0.70"/>
<text x="51.0" y="47.0" font-size="2.7" fill="#555" textLength="52.0" lengthAdjust="spacingAndGlyphs">(a)  First name and middle initial</text>
<line x1="141.5" y1="43.4" x2="141.5" y2="55.8" stroke="#222" stroke-width="0.50"/>
<text x="145.0" y="47.0" font-size="2.7" fill="#555" textLength="13.0" lengthAdjust="spacingAndGlyphs">Last name</text>
<line x1="245.7" y1="43.4" x2="245.7" y2="80.6" stroke="#222" stroke-width="0.90"/>
<text x="248.0" y="47.4" font-size="2.8" font-weight="700" fill="#444" textLength="47.0" lengthAdjust="spacingAndGlyphs">(b)  Social security number</text>
<line x1="48.5" y1="55.8" x2="245.7" y2="55.8" stroke="#222" stroke-width="0.60"/>
<line x1="245.7" y1="56.0" x2="298.0" y2="56.0" stroke="#222" stroke-width="1.00"/>
<text x="51.0" y="59.5" font-size="2.7" fill="#555" textLength="12.0" lengthAdjust="spacingAndGlyphs">Address</text>
<line x1="48.5" y1="68.7" x2="245.7" y2="68.7" stroke="#222" stroke-width="0.60"/>
<text x="51.0" y="71.8" font-size="2.7" fill="#555" textLength="50.0" lengthAdjust="spacingAndGlyphs">City or town, state, and ZIP code</text>
<line x1="48.5" y1="80.6" x2="298.0" y2="80.6" stroke="#222" stroke-width="0.70"/>
<text x="248.0" y="60.1" font-size="3.0" font-weight="700" fill="#333" textLength="48.0" lengthAdjust="spacingAndGlyphs">Does your name match the</text>
<text x="248.0" y="63.9" font-size="3.0" font-weight="700" fill="#333" textLength="48.0" lengthAdjust="spacingAndGlyphs">name on your social security</text>
<text x="248.0" y="67.7" font-size="3.0" fill="#333" textLength="48.0" lengthAdjust="spacingAndGlyphs">card? If not, to ensure you get</text>
<text x="248.0" y="71.6" font-size="3.0" fill="#333" textLength="35.0" lengthAdjust="spacingAndGlyphs">credit for your earnings,</text>
<text x="248.0" y="75.5" font-size="3.0" fill="#333" textLength="47.0" lengthAdjust="spacingAndGlyphs">contact SSA at 800-772-1213</text>
<text x="248.0" y="79.1" font-size="3.0" fill="#333" textLength="33.0" lengthAdjust="spacingAndGlyphs">or go to www.ssa.gov.</text>
<text x="51.0" y="85.5" font-size="2.6" fill="#555" textLength="4.0" lengthAdjust="spacingAndGlyphs">(c)</text>
<rect x="60.3" y="82.5" width="3.3" height="3.8" stroke="#444" stroke-width="0.45" fill="#fff"/>
<text x="65.5" y="85.5" font-size="2.9" fill="#3a3a3a" textLength="57.5" lengthAdjust="spacingAndGlyphs">Single or Married filing separately</text>
<rect x="60.3" y="88.4" width="3.3" height="3.8" stroke="#444" stroke-width="0.45" fill="#fff"/>
<text x="65.5" y="91.4" font-size="2.9" fill="#3a3a3a" textLength="86.5" lengthAdjust="spacingAndGlyphs">Married filing jointly or Qualifying surviving spouse</text>
<rect x="60.3" y="94.2" width="3.3" height="3.8" stroke="#444" stroke-width="0.45" fill="#fff"/>
<text x="65.5" y="97.2" font-size="2.9" fill="#3a3a3a" textLength="232.5" lengthAdjust="spacingAndGlyphs">Head of household (Check only if you’re unmarried and pay more than half the costs of keeping up a home for yourself and a qualifying individual.)</text>
<line x1="19.0" y1="99.4" x2="298.0" y2="99.4" stroke="#111" stroke-width="1.00"/>
<text x="19.0" y="107.5" font-size="3.1" fill="#303030" textLength="276.0" lengthAdjust="spacingAndGlyphs">Complete Steps 2–4 ONLY if they apply to you; otherwise, skip to Step 5. See page 2 for more information on each step, who can</text>
<text x="19.0" y="112.8" font-size="3.1" fill="#383838" textLength="184.0" lengthAdjust="spacingAndGlyphs">claim exemption from withholding, and when to use the estimator at www.irs.gov/W4App.</text>
<line x1="19.0" y1="118.2" x2="298.0" y2="118.2" stroke="#333" stroke-width="0.90"/>
<text x="19.0" y="124.4" font-size="3.9" font-weight="700" fill="#111" textLength="16.0" lengthAdjust="spacingAndGlyphs">Step 2:</text>
<text x="19.0" y="132.0" font-size="3.9" font-weight="700" fill="#111" textLength="26.0" lengthAdjust="spacingAndGlyphs">Multiple Jobs</text>
<text x="19.0" y="137.7" font-size="3.9" font-weight="700" fill="#111" textLength="20.0" lengthAdjust="spacingAndGlyphs">or Spouse</text>
<text x="19.0" y="143.7" font-size="3.9" font-weight="700" fill="#111" textLength="15.0" lengthAdjust="spacingAndGlyphs">Works</text>
<text x="63.5" y="124.1" font-size="3.1" fill="#383838" textLength="225.5" lengthAdjust="spacingAndGlyphs">Complete this step if you (1) hold more than one job at a time, or (2) are married filing jointly and your spouse</text>
<text x="63.5" y="129.9" font-size="3.1" fill="#383838" textLength="200.5" lengthAdjust="spacingAndGlyphs">also works. The correct amount of withholding depends on income earned from all of these jobs.</text>
<text x="63.5" y="137.6" font-size="3.1" fill="#383838" textLength="59.5" lengthAdjust="spacingAndGlyphs">Do only one of the following.</text>
<text x="63.5" y="144.4" font-size="3.1" fill="#383838" textLength="230.5" lengthAdjust="spacingAndGlyphs">(a)  Use the estimator at www.irs.gov/W4App for most accurate withholding for this step (and Steps 3–4). If you</text>
<text x="71.0" y="149.7" font-size="3.1" fill="#383838" textLength="132.0" lengthAdjust="spacingAndGlyphs">or your spouse have self-employment income, use this option; or</text>
<text x="63.5" y="156.4" font-size="3.1" fill="#383838" textLength="184.5" lengthAdjust="spacingAndGlyphs">(b)  Use the Multiple Jobs Worksheet on page 3 and enter the result in Step 4(c) below; or</text>
<text x="63.5" y="163.6" font-size="3.1" fill="#383838" textLength="224.5" lengthAdjust="spacingAndGlyphs">(c)  If there are only two jobs total, you may check this box. Do the same on Form W-4 for the other job. This</text>
<text x="71.0" y="169.1" font-size="3.1" fill="#383838" textLength="217.0" lengthAdjust="spacingAndGlyphs">option is generally more accurate than (b) if pay at the lower paying job is more than half of the pay at the</text>
<text x="71.0" y="175.1" font-size="3.1" fill="#383838" textLength="108.0" lengthAdjust="spacingAndGlyphs">higher paying job. Otherwise, (b) is more accurate</text>
<text x="183.0" y="175.1" font-size="3.0" fill="#777" textLength="105.0" lengthAdjust="spacingAndGlyphs">. . . . . . . . . . . . . . . . . . . . . . . . .</text>
<rect x="291.8" y="172.0" width="4.8" height="4.6" stroke="#333" stroke-width="0.50" fill="#fff"/>
<text x="19.0" y="188.1" font-size="3.1" fill="#303030" textLength="276.0" lengthAdjust="spacingAndGlyphs">Complete Steps 3–4(b) on Form W-4 for only ONE of these jobs. Leave those steps blank for the other jobs. (Your withholding will</text>
<text x="19.0" y="193.1" font-size="3.1" fill="#383838" textLength="189.0" lengthAdjust="spacingAndGlyphs">be most accurate if you complete Steps 3–4(b) on the Form W-4 for the highest paying job.)</text>
<line x1="19.0" y1="198.6" x2="298.0" y2="198.6" stroke="#333" stroke-width="0.90"/>
<text x="19.0" y="204.6" font-size="3.9" font-weight="700" fill="#111" textLength="16.0" lengthAdjust="spacingAndGlyphs">Step 3:</text>
<text x="19.0" y="212.4" font-size="3.9" font-weight="700" fill="#111" textLength="13.0" lengthAdjust="spacingAndGlyphs">Claim</text>
<text x="19.0" y="218.4" font-size="3.9" font-weight="700" fill="#111" textLength="27.0" lengthAdjust="spacingAndGlyphs">Dependent</text>
<text x="19.0" y="224.4" font-size="3.9" font-weight="700" fill="#111" textLength="22.0" lengthAdjust="spacingAndGlyphs">and Other</text>
<text x="19.0" y="230.4" font-size="3.9" font-weight="700" fill="#111" textLength="18.0" lengthAdjust="spacingAndGlyphs">Credits</text>
<text x="63.5" y="204.7" font-size="3.1" fill="#383838" textLength="174.5" lengthAdjust="spacingAndGlyphs">If your total income will be $200,000 or less ($400,000 or less if married filing jointly):</text>
<text x="71.0" y="212.7" font-size="3.1" fill="#383838" textLength="136.0" lengthAdjust="spacingAndGlyphs">Multiply the number of qualifying children under age 17 by $2,000</text>
<text x="209.0" y="213.1" font-size="3.0" fill="#333" textLength="2.5" lengthAdjust="spacingAndGlyphs">$</text>
<line x1="209.0" y1="214.3" x2="246.0" y2="214.3" stroke="#222" stroke-width="0.50"/>
<text x="71.0" y="222.1" font-size="3.1" fill="#383838" textLength="132.0" lengthAdjust="spacingAndGlyphs">Multiply the number of other dependents by $500 . . . . . . .</text>
<text x="209.0" y="222.5" font-size="3.0" fill="#333" textLength="2.5" lengthAdjust="spacingAndGlyphs">$</text>
<line x1="209.0" y1="223.5" x2="246.0" y2="223.5" stroke="#222" stroke-width="0.50"/>
<text x="63.5" y="231.6" font-size="3.1" fill="#383838" textLength="181.5" lengthAdjust="spacingAndGlyphs">Add the amounts above for qualifying children and other dependents. You may add to</text>
<text x="63.5" y="237.1" font-size="3.1" fill="#383838" textLength="179.5" lengthAdjust="spacingAndGlyphs">this the amount of any other credits. Enter the total here . . . . . . . . . . . .</text>
<text x="253.5" y="237.2" font-size="3.2" font-weight="700" fill="#222" textLength="2.5" lengthAdjust="spacingAndGlyphs">3</text>
<text x="262.0" y="237.1" font-size="3.0" fill="#333" textLength="2.5" lengthAdjust="spacingAndGlyphs">$</text>
<line x1="249.4" y1="198.6" x2="249.4" y2="291.5" stroke="#333" stroke-width="0.60"/>
<line x1="260.7" y1="198.6" x2="260.7" y2="291.5" stroke="#333" stroke-width="0.60"/>
<line x1="19.0" y1="239.0" x2="298.0" y2="239.0" stroke="#333" stroke-width="0.90"/>
<text x="19.0" y="244.9" font-size="3.9" font-weight="700" fill="#111" textLength="16.0" lengthAdjust="spacingAndGlyphs">Step 4</text>
<text x="19.0" y="250.4" font-size="3.9" font-weight="700" fill="#111" textLength="20.0" lengthAdjust="spacingAndGlyphs">(optional):</text>
<text x="19.0" y="258.8" font-size="3.9" font-weight="700" fill="#111" textLength="14.0" lengthAdjust="spacingAndGlyphs">Other</text>
<text x="19.0" y="264.8" font-size="3.9" font-weight="700" fill="#111" textLength="28.0" lengthAdjust="spacingAndGlyphs">Adjustments</text>
<text x="63.5" y="244.6" font-size="3.1" fill="#383838" textLength="182.5" lengthAdjust="spacingAndGlyphs">(a)  Other income (not from jobs). If you want tax withheld for other income you</text>
<text x="71.0" y="250.4" font-size="3.1" fill="#383838" textLength="175.0" lengthAdjust="spacingAndGlyphs">expect this year that won’t have withholding, enter the amount of other income here.</text>
<text x="186.0" y="255.7" font-size="3.0" fill="#777" textLength="59.0" lengthAdjust="spacingAndGlyphs">here . . . . . . . . .</text>
<text x="186.0" y="266.1" font-size="3.1" fill="#383838" textLength="60.0" lengthAdjust="spacingAndGlyphs">n the standard deduction and</text>
<text x="186.0" y="271.7" font-size="3.1" fill="#383838" textLength="60.0" lengthAdjust="spacingAndGlyphs">orksheet on page 3 and enter</text>
<text x="186.0" y="278.1" font-size="3.0" fill="#777" textLength="59.0" lengthAdjust="spacingAndGlyphs">. . . . . . . . . . .</text>
<text x="186.0" y="289.7" font-size="3.1" fill="#383838" textLength="59.0" lengthAdjust="spacingAndGlyphs">thhold each pay period . .</text>
<text x="250.5" y="255.7" font-size="3.0" font-weight="700" fill="#222" textLength="8.5" lengthAdjust="spacingAndGlyphs">4(a)</text>
<text x="262.0" y="255.7" font-size="3.0" fill="#333" textLength="2.5" lengthAdjust="spacingAndGlyphs">$</text>
<text x="250.5" y="277.6" font-size="3.0" font-weight="700" fill="#222" textLength="8.5" lengthAdjust="spacingAndGlyphs">4(b)</text>
<text x="262.0" y="277.6" font-size="3.0" fill="#333" textLength="2.5" lengthAdjust="spacingAndGlyphs">$</text>
<text x="250.5" y="289.7" font-size="3.0" font-weight="700" fill="#222" textLength="8.5" lengthAdjust="spacingAndGlyphs">4(c)</text>
<text x="262.0" y="289.7" font-size="3.0" fill="#333" textLength="2.5" lengthAdjust="spacingAndGlyphs">$</text>
<line x1="249.4" y1="257.2" x2="298.0" y2="257.2" stroke="#333" stroke-width="0.60"/>
<line x1="249.4" y1="279.5" x2="298.0" y2="279.5" stroke="#333" stroke-width="0.60"/>
<line x1="249.4" y1="291.5" x2="298.0" y2="291.5" stroke="#333" stroke-width="0.70"/>
<rect x="47.8" y="252.4" width="137.6" height="52.4" stroke="#555" stroke-width="0.60" fill="#fff"/>
<rect x="191.5" y="292.7" width="49.1" height="15.7" stroke="#555" stroke-width="0.60" fill="#fff"/>
<line x1="19.0" y1="304.8" x2="191.5" y2="304.8" stroke="#333" stroke-width="0.90"/>
<line x1="240.6" y1="304.8" x2="298.0" y2="304.8" stroke="#333" stroke-width="0.90"/>
<text x="19.0" y="310.7" font-size="3.9" font-weight="700" fill="#111" textLength="16.0" lengthAdjust="spacingAndGlyphs">Step 5:</text>
<text x="19.0" y="317.9" font-size="3.9" font-weight="700" fill="#111" textLength="10.0" lengthAdjust="spacingAndGlyphs">Sign</text>
<text x="19.0" y="323.8" font-size="3.9" font-weight="700" fill="#111" textLength="12.0" lengthAdjust="spacingAndGlyphs">Here</text>
<line x1="48.3" y1="304.8" x2="48.3" y2="359.6" stroke="#222" stroke-width="0.70"/>
<text x="51.0" y="310.3" font-size="2.9" fill="#444" textLength="140.0" lengthAdjust="spacingAndGlyphs">Under penalties of perjury, I declare that this certificate, to the best of my kn</text>
<text x="240.6" y="310.3" font-size="2.9" fill="#444" textLength="43.4" lengthAdjust="spacingAndGlyphs">correct, and complete.</text>
<line x1="52.7" y1="325.8" x2="230.5" y2="325.8" stroke="#333" stroke-width="0.60"/>
<line x1="238.5" y1="325.8" x2="298.0" y2="325.8" stroke="#333" stroke-width="0.60"/>
<text x="54.0" y="330.4" font-size="3.2" font-weight="700" fill="#222" textLength="34.0" lengthAdjust="spacingAndGlyphs">Employee’s signature</text>
<text x="89.0" y="330.3" font-size="3.1" fill="#383838" textLength="98.0" lengthAdjust="spacingAndGlyphs">(This form is not valid unless you sign it.)</text>
<text x="239.0" y="330.4" font-size="3.2" font-weight="700" fill="#222" textLength="8.0" lengthAdjust="spacingAndGlyphs">Date</text>
<line x1="19.0" y1="335.0" x2="298.0" y2="335.0" stroke="#333" stroke-width="0.90"/>
<text x="19.0" y="341.4" font-size="3.9" font-weight="700" fill="#111" textLength="20.0" lengthAdjust="spacingAndGlyphs">Employers</text>
<text x="19.0" y="347.0" font-size="3.9" font-weight="700" fill="#111" textLength="11.0" lengthAdjust="spacingAndGlyphs">Only</text>
<text x="51.0" y="340.3" font-size="2.7" fill="#555" textLength="47.0" lengthAdjust="spacingAndGlyphs">Employer’s name and address</text>
<line x1="201.6" y1="335.0" x2="201.6" y2="359.6" stroke="#333" stroke-width="0.60"/>
<text x="204.0" y="340.0" font-size="2.7" fill="#555" textLength="17.0" lengthAdjust="spacingAndGlyphs">First date of</text>
<text x="204.0" y="344.8" font-size="2.7" fill="#555" textLength="18.0" lengthAdjust="spacingAndGlyphs">employment</text>
<line x1="242.2" y1="335.0" x2="242.2" y2="359.6" stroke="#333" stroke-width="0.60"/>
<text x="245.0" y="340.0" font-size="2.7" fill="#555" textLength="34.0" lengthAdjust="spacingAndGlyphs">Employer identification</text>
<text x="245.0" y="344.8" font-size="2.7" fill="#555" textLength="24.0" lengthAdjust="spacingAndGlyphs">number (EIN)</text>
<line x1="19.0" y1="359.6" x2="298.0" y2="359.6" stroke="#111" stroke-width="1.00"/>
<text x="19.0" y="364.7" font-size="3.0" font-weight="700" fill="#333" textLength="129.0" lengthAdjust="spacingAndGlyphs">For Privacy Act and Paperwork Reduction Act Notice, see page 3.</text>
<text x="193.0" y="364.6" font-size="2.7" fill="#555" textLength="27.0" lengthAdjust="spacingAndGlyphs">Cat. No. 10220Q</text>
<text x="269.0" y="364.4" font-size="2.2" fill="#777" textLength="7.0" lengthAdjust="spacingAndGlyphs">Form</text>
<text x="277.0" y="364.6" font-size="4.4" font-weight="700" fill="#222" textLength="10.0" lengthAdjust="spacingAndGlyphs">W-4</text>
<text x="288.0" y="364.5" font-size="2.4" fill="#777" textLength="10.0" lengthAdjust="spacingAndGlyphs">(2024)</text></svg>

<div class="a" style="left:236px;top:776px;width:60px;height:40px;background:#3f3f3f;border-radius:8px"></div>
<div class="t" style="left:262px;top:789px;font-size:15px;color:#7a7a7a">1</div>
<div class="a" style="left:307px;top:776px;width:139px;height:40px;background:#232323;border:1px solid #3e3e3e;border-radius:8px"></div>
<svg style="left:321px;top:788px" width="10" height="16" viewBox="0 0 10 16"><path d="M8 1 L2 8 L8 15" fill="none" stroke="#6c6c6c" stroke-width="1.5"/></svg>
<div class="t" style="left:371px;top:789px;font-size:15px">1</div>
<svg style="left:421px;top:788px" width="10" height="16" viewBox="0 0 10 16"><path d="M2 1 L8 8 L2 15" fill="none" stroke="#eee" stroke-width="1.5"/></svg>
<div class="a" style="left:456px;top:776px;width:60px;height:40px;background:#3f3f3f;border-radius:8px"></div>
<div class="t" style="left:482px;top:789px;font-size:15px">4</div>

<div class="a" style="left:621px;top:104px;width:1px;height:746px;background:#3a3a3a"></div>

<!-- ===== right column ===== -->
<div class="a" style="left:650px;top:215px;width:431px;height:1px;background:#3e3e3e"></div>
<div class="t" style="left:1034px;top:249px;font-size:15px">Collate</div>
<div class="a" style="left:1041px;top:104px;width:40px;height:40px;background:#3d3d3d;border-radius:10px"></div>
<div class="a" style="left:1041px;top:154px;width:40px;height:40px;background:#3d3d3d;border-radius:10px"></div>

<div class="a cboff" style="left:660px;top:346px"></div>
<div class="t" style="left:691px;top:349px;font-size:15px;letter-spacing:-0.1px;color:#d0d0d0">Print As Image</div>
<div class="a cboff" style="left:660px;top:396px"></div>
<div class="t" style="left:691px;top:399px;font-size:15px;letter-spacing:-0.7px">Reverse Pages</div>

<div class="a" style="left:650px;top:446px;width:431px;height:1px;background:#3e3e3e"></div>
<div class="t b" style="left:650px;top:481px;font-size:15px;letter-spacing:-0.54px">Page Range</div>

<div class="a dd" style="left:650px;top:520px;width:174px;height:38px"></div>
<div class="t" style="left:664px;top:533px;font-size:15px">1</div>
<div class="t" style="left:845px;top:533px;font-size:15px;color:#999">-</div>
<div class="a dd" style="left:870px;top:520px;width:173px;height:38px"></div>
<div class="t" style="left:883px;top:533px;font-size:15px">4</div>
<div class="t" style="left:1059px;top:533px;font-size:15px;color:#7a7a7a">/ 4</div>

<div class="a dd" style="left:650px;top:572px;width:431px;height:39px"></div>
<div class="t" style="left:661px;top:585px;font-size:15px;letter-spacing:-0.5px">All Pages</div>
<svg style="left:1055px;top:589px" width="10" height="6" viewBox="0 0 10 6"><path d="M1 1 L5 5 L9 1" fill="none" stroke="#eee" stroke-width="1.5"/></svg>

<div class="a" style="left:650px;top:632px;width:431px;height:1px;background:#3e3e3e"></div>

<div class="a" style="left:650px;top:653px;width:431px;height:40px;background:#3e3d41;border-radius:8px"></div>
<div class="a" style="left:654px;top:657px;width:103px;height:32px;background:#232226;border-radius:7px"></div>
<div class="t b" style="left:705px;top:666px;font-size:15px;letter-spacing:-0.3px;transform:translateX(-50%)">Size</div>
<div class="t" style="left:811px;top:666px;font-size:15px;letter-spacing:-0.3px;transform:translateX(-50%);color:#d6d6d6">Poster</div>
<div class="t" style="left:919px;top:666px;font-size:15px;letter-spacing:0.7px;transform:translateX(-50%);color:#d6d6d6">Multiple</div>
<div class="t" style="left:1025px;top:666px;font-size:15px;letter-spacing:0.1px;transform:translateX(-50%);color:#d6d6d6">Booklet</div>

<div class="a" style="left:659px;top:722px;width:22px;height:22px;border-radius:50%;background:#7476f5"></div>
<div class="a" style="left:665px;top:728px;width:10px;height:10px;border-radius:50%;background:#fff"></div>
<div class="t" style="left:689px;top:726px;font-size:15px">Fit</div>
<div class="a rdoff" style="left:890px;top:722px"></div>
<div class="t" style="left:921px;top:726px;font-size:15px;letter-spacing:-0.5px">Actual Size</div>
<div class="a rdoff" style="left:659px;top:772px"></div>
<div class="t" style="left:689px;top:776px;font-size:15px;letter-spacing:-0.4px">Custom Scale (%):</div>
<div class="a" style="left:991px;top:763px;width:90px;height:39px;background:#383838;border:1px solid #444;border-radius:8px"></div>
<div class="t" style="left:1005px;top:776px;font-size:15px;letter-spacing:-0.6px;color:#777">100</div>
<div class="a rdoff" style="left:659px;top:822px"></div>
<div class="t" style="left:689px;top:826px;font-size:15px;letter-spacing:-0.3px">Shrink oversized pages</div>

<div class="a" style="left:744px;top:858px;width:170px;height:40px;background:#7b7ff8;border-radius:8px"></div>
<div class="t" style="left:828px;top:871px;font-size:15px;letter-spacing:0.3px;transform:translateX(-50%);color:#f4f4ff">Print</div>
<div class="a" style="left:924px;top:858px;width:169px;height:40px;background:#444;border-radius:8px"></div>
<div class="t" style="left:1008px;top:871px;font-size:15px;letter-spacing:-0.2px;transform:translateX(-50%)">Cancel</div>


<!-- dialog icons -->
<svg style="left:0;top:0" width="1243" height="941" fill="none" stroke-linecap="round" stroke-linejoin="round">
 <g stroke="#eeeeee" stroke-width="1.5">
  <path d="M1080 41.5 L1093.5 55 M1093.5 41.5 L1080 55"/>
  <!-- printer -->
  <path d="M1055.6 120 L1055.6 113 Q1055.6 111.4 1057.2 111.4 L1065.6 111.4 Q1067.2 111.4 1067.2 113 L1067.2 120"/>
  <path d="M1055.6 131.6 L1053 131.6 Q1050.6 131.6 1050.6 129 L1050.6 123 Q1050.6 120 1053.4 120 L1069.4 120 Q1072.2 120 1072.2 123 L1072.2 129 Q1072.2 131.6 1069.8 131.6 L1067.2 131.6"/>
  <path d="M1055.6 124.6 L1067.2 124.6 L1067.2 135 Q1067.2 136.4 1065.8 136.4 L1057 136.4 Q1055.6 136.4 1055.6 135 Z"/>
  <path d="M1064.2 120.8 L1064.4 120.8 M1066.8 120.8 L1067 120.8" stroke-width="1.3"/>
  <!-- save -->
  <path d="M1055 163.6 L1066.8 163.6 L1070.6 168.6 L1070.6 181.6 Q1070.6 184.8 1067.4 184.8 L1055 184.8 Q1051.8 184.8 1051.8 181.6 L1051.8 166.8 Q1051.8 163.6 1055 163.6 Z"/>
  <path d="M1056.8 163.6 L1056.8 166 Q1056.8 167.6 1058.4 167.6 L1064 167.6 Q1065.6 167.6 1065.6 166 L1065.6 163.6"/>
  <circle cx="1061.2" cy="176.4" r="2.8"/>
  <!-- page range icon -->
  <path d="M1063 497.5 L1054.5 497.5 Q1051.5 497.5 1051.5 494.5 L1051.5 479.5 Q1051.5 476.5 1054.5 476.5 L1066.5 476.5 Q1069.5 476.5 1069.5 479.5 L1069.5 489.5"/>
  <path d="M1055.6 481.6 L1062.6 481.6 M1055.6 486 L1060.4 486"/>
  <path d="M1060 494.2 L1073 494.2 M1062.6 491.6 L1060 494.2 L1062.6 496.8 M1070.4 491.6 L1073 494.2 L1070.4 496.8"/>
 </g>
 <g stroke-width="1.3">
  <path d="M800.5 535.5 L804 532 L807.5 535.5" stroke="#e6e6e6"/>
  <path d="M800.5 543.5 L804 547 L807.5 543.5" stroke="#777"/>
  <path d="M1018.5 535.5 L1022 532 L1025.5 535.5" stroke="#777"/>
  <path d="M1018.5 543.5 L1022 547 L1025.5 543.5" stroke="#e6e6e6"/>
  <path d="M1056.5 776.5 L1060 773 L1063.5 776.5" stroke="#6c6c6c"/>
  <path d="M1056.5 788.5 L1060 792 L1063.5 788.5" stroke="#6c6c6c"/>
 </g>
</svg>

<!-- printer dropdown -->
<div class="a" style="left:650px;top:104px;width:381px;height:40px;background:#232323;border:1px solid #6b6fd6;border-radius:9px"></div>
<div class="t" style="left:661px;top:118px;font-size:15px">Microsoft Print to PDF</div>
<div class="a" style="left:995px;top:109px;width:30px;height:30px;background:#7a7ef8;border-radius:6px"></div>
<svg style="left:1005px;top:121px" width="10" height="6" viewBox="0 0 10 6"><path d="M1 1 L5 5 L9 1" fill="none" stroke="#fff" stroke-width="1.5"/></svg>

<!-- dropdown list -->
<div class="a" style="left:650px;top:148px;width:381px;height:197px;background:#353535;border:1px solid #484848;border-radius:8px;box-shadow:0 8px 24px rgba(0,0,0,.3)"></div>
<div class="t" style="left:675px;top:173px;font-size:15px;letter-spacing:-0.6px">Fax</div>
<div class="a" style="left:656px;top:198px;width:370px;height:54px;border:5px solid #b986f2"></div>
<div class="a" style="left:661px;top:203px;width:359px;height:41px;background:#474747;border-radius:6px"></div>
<div class="t" style="left:675px;top:219px;font-size:15px">Microsoft Print to PDF</div>
<div class="t" style="left:675px;top:263px;font-size:15px;letter-spacing:-0.1px">Microsoft XPS Document Writer</div>
<div class="t" style="left:675px;top:308px;font-size:15px;letter-spacing:-0.2px">OneNote (Desktop)</div>
</body></html>
